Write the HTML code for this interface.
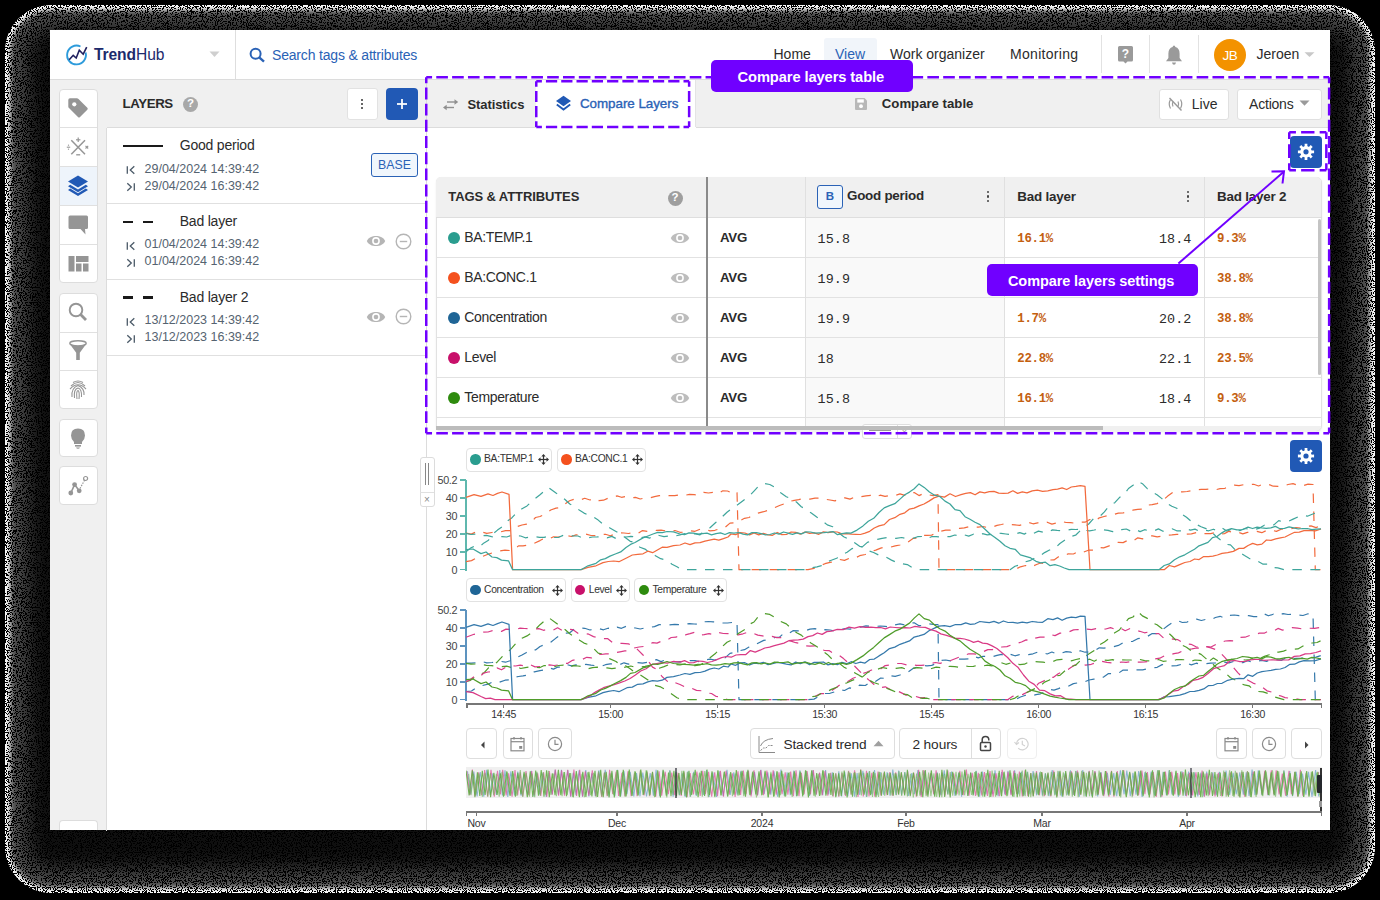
<!DOCTYPE html><html><head><meta charset='utf-8'><style>
html,body{margin:0;padding:0;}
body{width:1380px;height:900px;overflow:hidden;background:#000;position:relative;font-family:'Liberation Sans',sans-serif;}
.a{position:absolute;box-sizing:border-box;}
.t{position:absolute;line-height:1;white-space:nowrap;}
svg.a{overflow:visible;}
</style></head><body><svg class='a' style='left:0;top:0' width='1380' height='900'>
<defs>
<clipPath id="hc"><rect x="5" y="5" width="1370" height="888" rx="46" ry="46"/></clipPath>
<filter id="bl1" x="-5%" y="-5%" width="110%" height="110%"><feGaussianBlur stdDeviation="2.5"/></filter>
<filter id="bl2" x="-5%" y="-5%" width="110%" height="110%"><feGaussianBlur stdDeviation="10"/></filter>
<filter id="hn" x="0" y="0" width="1380" height="900" filterUnits="userSpaceOnUse" color-interpolation-filters="sRGB">
  <feTurbulence type="fractalNoise" baseFrequency="0.8" numOctaves="2" seed="5" result="n"/>
  <feColorMatrix in="n" type="matrix" values="1 0 0 0 0.04  1 0 0 0 0.04  1 0 0 0 0.04  0 0 0 0 1" result="no"/>
  <feComponentTransfer in="no" result="th"><feFuncR type="discrete" tableValues="0 1"/><feFuncG type="discrete" tableValues="0 1"/><feFuncB type="discrete" tableValues="0 1"/></feComponentTransfer>
  <feComposite in="SourceGraphic" in2="th" operator="arithmetic" k1="1" k2="0" k3="0" k4="0" result="m"/>
  <feComposite in="m" in2="SourceAlpha" operator="in"/>
</filter>
</defs>
<g filter="url(#hn)"><g clip-path="url(#hc)">
<rect x="0" y="0" width="1380" height="900" fill="rgb(15,15,15)"/>
<rect x="5" y="5" width="1370" height="888" rx="46" ry="46" fill="none" stroke="rgba(255,255,255,0.28)" stroke-width="44" filter="url(#bl2)"/>
<rect x="5" y="5" width="1370" height="888" rx="46" ry="46" fill="none" stroke="#fff" stroke-width="10" filter="url(#bl1)"/>
</g></g></svg>
<div class='a' style="left:50px;top:30px;width:1280px;height:800px;background:#fff;overflow:hidden;"></div>
<div class='a' style="left:50px;top:79px;width:1280px;height:1px;background:#dcdcdc;"></div>
<svg class='a' style='left:64px;top:42px;' width='26' height='26' viewBox='0 0 26 26'><path d='M21.6,10.6 A9.4,9.4 0 1 1 16.5,4.5' fill='none' stroke='#2d9bdb' stroke-width='1.9'/><polyline points='5.2,17.7 9.2,13.3 12.2,16 15.3,8.2 19.2,12.2 22.7,5.2' fill='none' stroke='#1f1f5e' stroke-width='1.6' stroke-linejoin='miter'/></svg>
<div class='t' style="left:94px;top:47.04px;font-size:15.6px;color:#1c2a6c;letter-spacing:-0.1px;"><b style='font-weight:700'>Trend</b>Hub</div>
<svg class='a' style='left:209px;top:51px;' width='12' height='7' viewBox='0 0 12 7'><polygon points='0.5,0.5 10.5,0.5 5.5,6' fill='#cfcfcf'/></svg>
<div class='a' style="left:235px;top:30px;width:1px;height:49px;background:#dedede;"></div>
<svg class='a' style='left:249px;top:47px;' width='18' height='16' viewBox='0 0 18 16'><circle cx='6.6' cy='6.8' r='5' fill='none' stroke='#2a62b6' stroke-width='2'/><line x1='10.2' y1='10.4' x2='15' y2='14.6' stroke='#2a62b6' stroke-width='2.4' stroke-linecap='butt'/></svg>
<div class='t' style="left:272px;top:48.10px;font-size:14px;color:#2a62b6;letter-spacing:-0.18px;">Search tags &amp; attributes</div>
<div class='a' style="left:824px;top:38px;width:53px;height:41px;background:#f1f5fa;border-radius:3px 3px 0 0;"></div>
<div class='t' style="left:773.5px;top:46.70px;font-size:14px;color:#2b2b2b;">Home</div>
<div class='t' style="left:835px;top:46.70px;font-size:14px;color:#2a62b6;">View</div>
<div class='t' style="left:890px;top:46.70px;font-size:14px;color:#2b2b2b;">Work organizer</div>
<div class='t' style="left:1010px;top:46.70px;font-size:14px;color:#2b2b2b;letter-spacing:0.3px;">Monitoring</div>
<div class='a' style="left:1101px;top:35px;width:1px;height:38px;background:#e2e2e2;"></div>
<div class='a' style="left:1149px;top:35px;width:1px;height:38px;background:#e2e2e2;"></div>
<div class='a' style="left:1198px;top:35px;width:1px;height:38px;background:#e2e2e2;"></div>
<svg class='a' style='left:1117px;top:45px;' width='18' height='20' viewBox='0 0 18 20'><path d='M2.5,1 H14.5 Q16,1 16,2.5 V15 Q16,16.5 14.5,16.5 H10.5 L8.5,18.5 L6.5,16.5 H2.5 Q1,16.5 1,15 V2.5 Q1,1 2.5,1 Z' fill='#9a9a9a'/><text x='8.5' y='13.3' font-size='12' font-weight='700' fill='#fff' text-anchor='middle' font-family='Liberation Sans'>?</text></svg>
<svg class='a' style='left:1164px;top:44px;' width='20' height='22' viewBox='0 0 20 22'><path d='M10,1.5 Q11.2,1.5 11.4,3 Q15.5,4.2 15.6,9.5 V14 L18,17.2 H2 L4.4,14 V9.5 Q4.5,4.2 8.6,3 Q8.8,1.5 10,1.5 Z' fill='#9a9a9a'/><path d='M8,18.6 H12 Q11.5,20.8 10,20.8 Q8.5,20.8 8,18.6 Z' fill='#9a9a9a'/></svg>
<div class='a' style="left:1214px;top:39px;width:32px;height:32px;background:#f39200;border-radius:50%;"></div>
<div class='t' style="left:1130px;width:200px;text-align:center;top:48.52px;font-size:13.5px;color:#fff;letter-spacing:-0.3px;">JB</div>
<div class='t' style="left:1256.5px;top:47.40px;font-size:14px;color:#2b2b2b;">Jeroen</div>
<svg class='a' style='left:1304px;top:52px;' width='12' height='6' viewBox='0 0 12 6'><polygon points='0.5,0.3 10.5,0.3 5.5,5' fill='#c8c8c8'/></svg>
<div class='a' style="left:50px;top:80px;width:56px;height:750px;background:#f0f0f0;"></div>
<div class='a' style="left:106px;top:127.5px;width:1px;height:703px;background:#dcdcdc;"></div>
<div class='a' style="left:58.5px;top:88.5px;width:39px;height:194.0px;background:#fff;border:1px solid #dddddd;border-radius:4px;"></div>
<div class='a' style="left:59px;top:127.3px;width:38px;height:1px;background:#e0e0e0;"></div>
<div class='a' style="left:59px;top:166.1px;width:38px;height:1px;background:#e0e0e0;"></div>
<div class='a' style="left:59px;top:204.89999999999998px;width:38px;height:1px;background:#e0e0e0;"></div>
<div class='a' style="left:59px;top:243.7px;width:38px;height:1px;background:#e0e0e0;"></div>
<div class='a' style="left:59.5px;top:167px;width:37px;height:38px;background:#eef4fb;"></div>
<div class='a' style="left:58.5px;top:292.7px;width:39px;height:116.39999999999999px;background:#fff;border:1px solid #dddddd;border-radius:4px;"></div>
<div class='a' style="left:59px;top:331.5px;width:38px;height:1px;background:#e0e0e0;"></div>
<div class='a' style="left:59px;top:370.29999999999995px;width:38px;height:1px;background:#e0e0e0;"></div>
<div class='a' style="left:58.5px;top:418.7px;width:39px;height:38.5px;background:#fff;border:1px solid #dddddd;border-radius:4px;"></div>
<div class='a' style="left:58.5px;top:466.3px;width:39px;height:38.7px;background:#fff;border:1px solid #dddddd;border-radius:4px;"></div>
<div class='a' style="left:58.5px;top:820px;width:39px;height:10px;background:#fff;border:1px solid #dddddd;border-bottom:none;border-radius:4px 4px 0 0;"></div>
<svg class='a' style='left:66px;top:97px;' width='24' height='24' viewBox='0 0 24 24'><path d='M2.3,3 Q2.3,1.3 4,1.3 H10.8 Q11.8,1.3 12.5,2 L21.3,10.8 Q22.3,11.8 21.3,12.8 L14,20.1 Q13,21.1 12,20.1 L3,11.1 Q2.3,10.4 2.3,9.4 Z' fill='#959595'/><circle cx='8.3' cy='7.3' r='2.1' fill='#fff'/></svg>
<svg class='a' style='left:66px;top:135px;' width='24' height='24' viewBox='0 0 24 24'><g stroke='#959595' stroke-width='1.5'><line x1='5.3' y1='5.3' x2='19' y2='19.3'/><line x1='19' y1='5.3' x2='5.3' y2='19.3'/><line x1='12.2' y1='2.5' x2='12.2' y2='7' stroke-width='1.2'/><line x1='10' y1='4.8' x2='14.4' y2='4.8' stroke-width='1.2'/><line x1='10.2' y1='19.8' x2='14.2' y2='19.8' stroke-width='1.3'/><line x1='0.8' y1='12.2' x2='4.2' y2='12.2' stroke-width='1.1'/><line x1='19.5' y1='10.8' x2='22.2' y2='13.5' stroke-width='1.1'/><line x1='22.2' y1='10.8' x2='19.5' y2='13.5' stroke-width='1.1'/></g><circle cx='2.5' cy='10.2' r='0.65' fill='#959595'/><circle cx='2.5' cy='14.2' r='0.65' fill='#959595'/></svg>
<svg class='a' style='left:66px;top:174px;' width='24' height='24' viewBox='0 0 24 24'><path d='M12,1.5 L22,7.5 L12,13.5 L2,7.5 Z' fill='#2159b5'/><path d='M4.2,10.8 L12,15.5 L19.8,10.8 L22,12.2 L12,18.3 L2,12.2 Z' fill='#2159b5'/><path d='M4.2,14.6 L12,19.3 L19.8,14.6 L22,16 L12,22.1 L2,16 Z' fill='#2159b5'/></svg>
<svg class='a' style='left:68px;top:215px;' width='21' height='21' viewBox='0 0 21 21'><path d='M2,0.5 H18.5 Q20,0.5 20,2 V12.5 Q20,14 18.5,14 H17 L17.5,19.5 L12.5,14 H2 Q0.5,14 0.5,12.5 V2 Q0.5,0.5 2,0.5 Z' fill='#959595'/></svg>
<svg class='a' style='left:68px;top:255px;' width='21' height='18' viewBox='0 0 21 18'><rect x='0.5' y='1' width='6' height='15.5' fill='#959595'/><rect x='8' y='1' width='12.5' height='6' fill='#959595'/><rect x='8' y='8.5' width='5.5' height='8' fill='#959595'/><rect x='15' y='8.5' width='5.5' height='8' fill='#959595'/></svg>
<svg class='a' style='left:66px;top:300px;' width='24' height='24' viewBox='0 0 24 24'><circle cx='10' cy='10' r='6.3' fill='none' stroke='#959595' stroke-width='1.9'/><line x1='14.6' y1='14.6' x2='20' y2='20' stroke='#959595' stroke-width='2.8'/></svg>
<svg class='a' style='left:66px;top:339px;' width='24' height='24' viewBox='0 0 24 24'><ellipse cx='12' cy='4.3' rx='8.2' ry='2.6' fill='none' stroke='#959595' stroke-width='1.4'/><path d='M3.8,5 Q12,8.6 20.2,5 L13.8,13.8 V21 H10.2 V13.8 Z' fill='#959595'/></svg>
<svg class='a' style='left:66px;top:378px;' width='24' height='24' viewBox='0 0 24 24'><g fill='none' stroke='#959595' stroke-width='1.1'><path d='M5,8 Q12,1 19,8'/><path d='M4,11 Q12,2.5 20,11'/><path d='M6,19 Q5,10 12,7.5 Q18.5,10 18,17'/><path d='M8.5,20 Q7.5,11 12,10 Q16,11 15.5,19'/><path d='M11,21 Q10,13 12,12.5 Q13.8,13.5 13,21'/><path d='M7,4.5 Q12,1.5 17,4.5'/></g></svg>
<svg class='a' style='left:66px;top:426px;' width='24' height='24' viewBox='0 0 24 24'><path d='M12,2.5 Q19,2.5 19,9.5 Q19,13 16,16 V18 H8 V16 Q5,13 5,9.5 Q5,2.5 12,2.5 Z' fill='#959595'/><rect x='9' y='19' width='6' height='1.6' fill='#959595'/><path d='M10,21.5 H14 Q13.5,22.8 12,22.8 Q10.5,22.8 10,21.5 Z' fill='#959595'/></svg>
<svg class='a' style='left:66px;top:474px;' width='24' height='24' viewBox='0 0 24 24'><circle cx='4.8' cy='19' r='2.4' fill='#959595'/><circle cx='8.6' cy='10.6' r='2.4' fill='#959595'/><circle cx='13.2' cy='16.8' r='2.4' fill='#959595'/><circle cx='19.6' cy='4.5' r='2' fill='none' stroke='#959595' stroke-width='1.2'/><line x1='4.8' y1='19' x2='8.6' y2='10.6' stroke='#959595' stroke-width='1.6'/><line x1='8.6' y1='10.6' x2='13.2' y2='16.8' stroke='#959595' stroke-width='1.6'/><line x1='14' y1='14.5' x2='18.5' y2='6.3' stroke='#959595' stroke-width='1.2' stroke-dasharray='1.5 1.2'/></svg>
<div class='a' style="left:106px;top:80px;width:320px;height:48px;background:#f0f0f0;"></div>
<div class='a' style="left:107px;top:127px;width:319px;height:1px;background:#dcdcdc;"></div>
<div class='t' style="left:122.5px;top:97.00px;font-size:13.3px;color:#2b2b2b;font-weight:700;letter-spacing:-0.4px;">LAYERS</div>
<div class='a' style="left:183px;top:96.5px;width:15px;height:15px;background:#a8a8a8;border-radius:50%;"></div>
<div class='t' style="left:90.5px;width:200px;text-align:center;top:98.42px;font-size:11.5px;color:#fff;font-weight:700;">?</div>
<div class='a' style="left:346.8px;top:88.3px;width:30.8px;height:31.5px;background:#fff;border:1px solid #e2e2e2;border-radius:3px;"></div>
<div class='a' style="left:360.8px;top:98.65px;width:2.5px;height:2.5px;background:#333;border-radius:50%;"></div>
<div class='a' style="left:360.8px;top:102.7px;width:2.5px;height:2.5px;background:#333;border-radius:50%;"></div>
<div class='a' style="left:360.8px;top:106.75px;width:2.5px;height:2.5px;background:#333;border-radius:50%;"></div>
<div class='a' style="left:386px;top:88px;width:32px;height:32px;background:#2159b5;border-radius:4px;"></div>
<div class='a' style="left:397.1px;top:103.1px;width:10.1px;height:1.8px;background:rgba(255,255,255,0.88);"></div>
<div class='a' style="left:401.25px;top:99px;width:1.8px;height:10.1px;background:rgba(255,255,255,0.88);"></div>
<div class='a' style="left:107px;top:128px;width:319px;height:702px;background:#fff;"></div>
<div class='a' style="left:107px;top:203.2px;width:319px;height:1px;background:#e0e0e0;"></div>
<div class='a' style="left:122.8px;top:145.0px;width:40.5px;height:2.3px;background:#1a1a1a;"></div>
<div class='t' style="left:179.7px;top:138.30px;font-size:14px;color:#2b2b2b;letter-spacing:-0.2px;">Good period</div>
<svg class='a' style='left:126px;top:165.0px;' width='10' height='10' viewBox='0 0 10 10'><line x1='1.3' y1='1.2' x2='1.3' y2='8.8' stroke='#4b5a68' stroke-width='1.3'/><polyline points='8.3,1.3 4.3,5 8.3,8.7' fill='none' stroke='#4b5a68' stroke-width='1.3'/></svg>
<svg class='a' style='left:126px;top:182.0px;' width='10' height='10' viewBox='0 0 10 10'><line x1='8.3' y1='1.2' x2='8.3' y2='8.8' stroke='#4b5a68' stroke-width='1.3'/><polyline points='1.3,1.3 5.3,5 1.3,8.7' fill='none' stroke='#4b5a68' stroke-width='1.3'/></svg>
<div class='t' style="left:144.5px;top:162.57px;font-size:12.5px;color:#556370;">29/04/2024 14:39:42</div>
<div class='t' style="left:144.5px;top:179.57px;font-size:12.5px;color:#556370;">29/04/2024 16:39:42</div>
<div class='a' style="left:371px;top:153px;width:47px;height:24px;background:#f0f6fc;border:1px solid #2a62b6;border-radius:3px;"></div>
<div class='t' style="left:294.5px;width:200px;text-align:center;top:158.84px;font-size:12.3px;color:#2a62b6;letter-spacing:0.1px;">BASE</div>
<div class='a' style="left:107px;top:279.0px;width:319px;height:1px;background:#e0e0e0;"></div>
<div class='a' style="left:122.8px;top:220.60000000000002px;width:10px;height:2.3px;background:#1a1a1a;"></div>
<div class='a' style="left:142.8px;top:220.60000000000002px;width:10px;height:2.3px;background:#1a1a1a;"></div>
<div class='t' style="left:179.7px;top:214.10px;font-size:14px;color:#2b2b2b;letter-spacing:-0.2px;">Bad layer</div>
<svg class='a' style='left:126px;top:240.8px;' width='10' height='10' viewBox='0 0 10 10'><line x1='1.3' y1='1.2' x2='1.3' y2='8.8' stroke='#4b5a68' stroke-width='1.3'/><polyline points='8.3,1.3 4.3,5 8.3,8.7' fill='none' stroke='#4b5a68' stroke-width='1.3'/></svg>
<svg class='a' style='left:126px;top:257.8px;' width='10' height='10' viewBox='0 0 10 10'><line x1='8.3' y1='1.2' x2='8.3' y2='8.8' stroke='#4b5a68' stroke-width='1.3'/><polyline points='1.3,1.3 5.3,5 1.3,8.7' fill='none' stroke='#4b5a68' stroke-width='1.3'/></svg>
<div class='t' style="left:144.5px;top:238.38px;font-size:12.5px;color:#556370;">01/04/2024 14:39:42</div>
<div class='t' style="left:144.5px;top:255.38px;font-size:12.5px;color:#556370;">01/04/2024 16:39:42</div>
<svg class='a' style='left:366px;top:235.0px;' width='20' height='12' viewBox='0 0 20 12'><path d='M0.8,6 C3.5,-0.8 16.5,-0.8 19.2,6 C16.5,12.8 3.5,12.8 0.8,6 Z' fill='#b5b5b5'/><circle cx='10' cy='6' r='3.9' fill='#fff'/><circle cx='10' cy='6' r='2.3' fill='#b5b5b5'/></svg>
<svg class='a' style='left:395px;top:232.5px;' width='17' height='17' viewBox='0 0 17 17'><circle cx='8.5' cy='8.5' r='7.3' fill='none' stroke='#b5b5b5' stroke-width='1.4'/><line x1='4.8' y1='8.5' x2='12.2' y2='8.5' stroke='#b5b5b5' stroke-width='1.4'/></svg>
<div class='a' style="left:107px;top:354.8px;width:319px;height:1px;background:#e0e0e0;"></div>
<div class='a' style="left:122.8px;top:296.40000000000003px;width:10px;height:2.3px;background:#1a1a1a;"></div>
<div class='a' style="left:142.8px;top:296.40000000000003px;width:10px;height:2.3px;background:#1a1a1a;"></div>
<div class='t' style="left:179.7px;top:289.90px;font-size:14px;color:#2b2b2b;letter-spacing:-0.2px;">Bad layer 2</div>
<svg class='a' style='left:126px;top:316.6px;' width='10' height='10' viewBox='0 0 10 10'><line x1='1.3' y1='1.2' x2='1.3' y2='8.8' stroke='#4b5a68' stroke-width='1.3'/><polyline points='8.3,1.3 4.3,5 8.3,8.7' fill='none' stroke='#4b5a68' stroke-width='1.3'/></svg>
<svg class='a' style='left:126px;top:333.6px;' width='10' height='10' viewBox='0 0 10 10'><line x1='8.3' y1='1.2' x2='8.3' y2='8.8' stroke='#4b5a68' stroke-width='1.3'/><polyline points='1.3,1.3 5.3,5 1.3,8.7' fill='none' stroke='#4b5a68' stroke-width='1.3'/></svg>
<div class='t' style="left:144.5px;top:314.18px;font-size:12.5px;color:#556370;">13/12/2023 14:39:42</div>
<div class='t' style="left:144.5px;top:331.18px;font-size:12.5px;color:#556370;">13/12/2023 16:39:42</div>
<svg class='a' style='left:366px;top:310.8px;' width='20' height='12' viewBox='0 0 20 12'><path d='M0.8,6 C3.5,-0.8 16.5,-0.8 19.2,6 C16.5,12.8 3.5,12.8 0.8,6 Z' fill='#b5b5b5'/><circle cx='10' cy='6' r='3.9' fill='#fff'/><circle cx='10' cy='6' r='2.3' fill='#b5b5b5'/></svg>
<svg class='a' style='left:395px;top:308.3px;' width='17' height='17' viewBox='0 0 17 17'><circle cx='8.5' cy='8.5' r='7.3' fill='none' stroke='#b5b5b5' stroke-width='1.4'/><line x1='4.8' y1='8.5' x2='12.2' y2='8.5' stroke='#b5b5b5' stroke-width='1.4'/></svg>
<div class='a' style="left:426px;top:80px;width:1px;height:750px;background:#dcdcdc;"></div>
<div class='a' style="left:427px;top:80px;width:903px;height:47.5px;background:#f0f0f0;"></div>
<div class='a' style="left:427px;top:127px;width:903px;height:1px;background:#dcdcdc;"></div>
<svg class='a' style='left:443px;top:98.5px;' width='16' height='12' viewBox='0 0 16 12'><g stroke='#8f8f8f' stroke-width='1.4' fill='none'><line x1='4' y1='3' x2='12' y2='3'/><line x1='3' y1='8.5' x2='11' y2='8.5'/></g><polygon points='11.5,0.2 15.2,3 11.5,5.8' fill='#8f8f8f'/><polygon points='3.7,5.7 0,8.5 3.7,11.3' fill='#8f8f8f'/></svg>
<div class='t' style="left:467.5px;top:97.75px;font-size:13px;color:#2b2b2b;font-weight:700;letter-spacing:-0.1px;">Statistics</div>
<div class='a' style="left:536px;top:80px;width:159.5px;height:48px;background:#fff;"></div>
<div class='a' style="left:695px;top:80px;width:1px;height:47px;background:#e4e4e4;"></div>
<svg class='a' style='left:555px;top:95px;' width='17' height='17' viewBox='0 0 17 17'><path d='M8.5,0.8 L16,6 L8.5,11.2 L1,6 Z' fill='#2159b5'/><polyline points='1.8,9.5 8.5,14.6 15.2,9.5' fill='none' stroke='#2159b5' stroke-width='1.9'/></svg>
<div class='t' style="left:580px;top:97.41px;font-size:13.4px;color:#2a62b6;letter-spacing:-0.05px;-webkit-text-stroke:0.35px #2a62b6;">Compare Layers</div>
<svg class='a' style='left:854px;top:97px;' width='14' height='14' viewBox='0 0 14 14'><path d='M1,2 Q1,1 2,1 H10.5 L13,3.5 V12 Q13,13 12,13 H2 Q1,13 1,12 Z' fill='#b8b8b8'/><rect x='3.3' y='2.3' width='6.5' height='3.3' fill='#fff'/><circle cx='7' cy='9.2' r='1.9' fill='#fff'/></svg>
<div class='t' style="left:881.8px;top:97.08px;font-size:13.2px;color:#2b2b2b;font-weight:700;">Compare table</div>
<div class='a' style="left:1158.5px;top:88.5px;width:70.5px;height:31px;background:#fff;border:1px solid #e0e0e0;border-radius:3px;"></div>
<svg class='a' style='left:1167px;top:97px;' width='17' height='14' viewBox='0 0 17 14'><g fill='none' stroke='#9a9a9a' stroke-width='1.2'><path d='M3.5,2.5 Q1,7 3.5,11.5'/><path d='M13.5,2.5 Q16,7 13.5,11.5'/><path d='M6,4.5 Q4.8,7 6,9.5'/><path d='M11,4.5 Q12.2,7 11,9.5'/><line x1='2.5' y1='1' x2='14.5' y2='13.5' stroke-width='1.4'/></g></svg>
<div class='t' style="left:1191.8px;top:97.10px;font-size:14px;color:#2b2b2b;">Live</div>
<div class='a' style="left:1236.5px;top:88.5px;width:85px;height:31px;background:#fff;border:1px solid #e0e0e0;border-radius:3px;"></div>
<div class='t' style="left:1249px;top:97.10px;font-size:14px;color:#2b2b2b;letter-spacing:-0.2px;">Actions</div>
<svg class='a' style='left:1299px;top:100px;' width='12' height='7' viewBox='0 0 12 7'><polygon points='0.5,0.5 10.5,0.5 5.5,5.8' fill='#9a9a9a'/></svg>
<div class='a' style="left:1290px;top:136px;width:32px;height:31.5px;background:#2159b5;border-radius:4px;"></div>
<svg class='a' style='left:1290px;top:136px;' width='32' height='32' viewBox='0 0 32 32'><polygon points='21.44,14.47 24.08,14.41 24.08,17.19 21.44,17.13 20.79,18.71 22.70,20.53 20.73,22.50 18.91,20.59 17.33,21.24 17.39,23.88 14.61,23.88 14.67,21.24 13.09,20.59 11.27,22.50 9.30,20.53 11.21,18.71 10.56,17.13 7.92,17.19 7.92,14.41 10.56,14.47 11.21,12.89 9.30,11.07 11.27,9.10 13.09,11.01 14.67,10.36 14.61,7.72 17.39,7.72 17.33,10.36 18.91,11.01 20.73,9.10 22.70,11.07 20.79,12.89' fill='#fff'/><circle cx='16' cy='15.8' r='5.6' fill='#fff'/><circle cx='16' cy='15.8' r='2.6' fill='#2159b5'/></svg>
<div class='a' style="left:435.5px;top:176.5px;width:886.0px;height:254px;background:#fff;border:1px solid #e2e2e2;border-radius:5px;overflow:hidden;box-shadow:0 1px 2px rgba(0,0,0,0.08);"></div>
<div class='a' style="left:436.0px;top:176.8px;width:885.0px;height:41px;background:#f0f0f0;border-radius:5px 5px 0 0;"></div>
<div class='a' style="left:435.5px;top:217px;width:886.0px;height:1px;background:#dedede;"></div>
<div class='a' style="left:805px;top:218px;width:199.5px;height:208px;background:#f9f9f9;"></div>
<div class='a' style="left:436.0px;top:257px;width:885.0px;height:1px;background:#e2e2e2;"></div>
<div class='a' style="left:436.0px;top:297px;width:885.0px;height:1px;background:#e2e2e2;"></div>
<div class='a' style="left:436.0px;top:337px;width:885.0px;height:1px;background:#e2e2e2;"></div>
<div class='a' style="left:436.0px;top:377px;width:885.0px;height:1px;background:#e2e2e2;"></div>
<div class='a' style="left:436.0px;top:417px;width:885.0px;height:1px;background:#e2e2e2;"></div>
<div class='a' style="left:706px;top:176.5px;width:2px;height:250px;background:#8a8a8a;"></div>
<div class='a' style="left:804.5px;top:176.5px;width:1px;height:250px;background:#e0e0e0;"></div>
<div class='a' style="left:1004px;top:176.5px;width:1px;height:250px;background:#e0e0e0;"></div>
<div class='a' style="left:1204px;top:176.5px;width:1px;height:250px;background:#e0e0e0;"></div>
<div class='a' style="left:436.0px;top:426px;width:885.0px;height:4.5px;background:#f0f0f0;border-radius:0 0 5px 5px;"></div>
<div class='a' style="left:436.0px;top:426px;width:667px;height:4px;background:#bcbcbc;"></div>
<div class='a' style="left:1317.5px;top:218.5px;width:3.3px;height:156px;background:#c4c4c4;border-radius:2px;"></div>
<div class='t' style="left:448.3px;top:189.75px;font-size:13px;color:#2b2b2b;font-weight:700;letter-spacing:-0.1px;">TAGS &amp; ATTRIBUTES</div>
<div class='a' style="left:667.5px;top:190.5px;width:15px;height:15px;background:#9e9e9e;border-radius:50%;"></div>
<div class='t' style="left:575px;width:200px;text-align:center;top:192.42px;font-size:11.5px;color:#fff;font-weight:700;">?</div>
<div class='a' style="left:817px;top:185px;width:26px;height:24px;background:#f0f6fc;border:1px solid #2a62b6;border-radius:3px;"></div>
<div class='t' style="left:730px;width:200px;text-align:center;top:191.42px;font-size:11.5px;color:#2a62b6;font-weight:700;">B</div>
<div class='t' style="left:847px;top:189.41px;font-size:13.4px;color:#2b2b2b;font-weight:700;letter-spacing:-0.25px;">Good period</div>
<div class='t' style="left:1017.3px;top:189.91px;font-size:13.4px;color:#2b2b2b;font-weight:700;letter-spacing:-0.2px;">Bad layer</div>
<div class='t' style="left:1217px;top:189.91px;font-size:13.4px;color:#2b2b2b;font-weight:700;letter-spacing:-0.2px;">Bad layer 2</div>
<div class='a' style="left:986.5999999999999px;top:191.1px;width:2.4px;height:2.4px;background:#444;border-radius:50%;"></div>
<div class='a' style="left:986.5999999999999px;top:195.4px;width:2.4px;height:2.4px;background:#444;border-radius:50%;"></div>
<div class='a' style="left:986.5999999999999px;top:199.70000000000002px;width:2.4px;height:2.4px;background:#444;border-radius:50%;"></div>
<div class='a' style="left:1186.8px;top:191.1px;width:2.4px;height:2.4px;background:#444;border-radius:50%;"></div>
<div class='a' style="left:1186.8px;top:195.4px;width:2.4px;height:2.4px;background:#444;border-radius:50%;"></div>
<div class='a' style="left:1186.8px;top:199.70000000000002px;width:2.4px;height:2.4px;background:#444;border-radius:50%;"></div>
<div class='a' style="left:447.8px;top:232.20000000000002px;width:12px;height:12px;background:#2a9d8f;border-radius:50%;"></div>
<div class='t' style="left:464.3px;top:230.40px;font-size:14px;color:#2b2b2b;letter-spacing:-0.35px;">BA:TEMP.1</div>
<svg class='a' style='left:670px;top:231.8px;' width='20' height='12' viewBox='0 0 20 12'><path d='M0.8,6 C3.5,-0.8 16.5,-0.8 19.2,6 C16.5,12.8 3.5,12.8 0.8,6 Z' fill='#bdbdbd'/><circle cx='10' cy='6' r='3.9' fill='#fff'/><circle cx='10' cy='6' r='2.3' fill='#bdbdbd'/></svg>
<div class='t' style="left:720px;top:231.00px;font-size:13.3px;color:#2b2b2b;font-weight:700;letter-spacing:-0.3px;">AVG</div>
<div class='t' style="left:817.5px;top:232.82px;font-size:13.4px;color:#2b2b2b;font-family:'Liberation Mono',monospace;letter-spacing:0.1px;">15.8</div>
<div class='t' style="left:1017.3px;top:233.08px;font-size:12.4px;color:#c4600f;font-weight:700;font-family:'Liberation Mono',monospace;letter-spacing:-0.3px;">16.1%</div>
<div class='t' style="right:188.5px;top:232.82px;font-size:13.4px;color:#2b2b2b;font-family:'Liberation Mono',monospace;letter-spacing:0.1px;">18.4</div>
<div class='t' style="left:1217px;top:233.08px;font-size:12.4px;color:#c4600f;font-weight:700;font-family:'Liberation Mono',monospace;letter-spacing:-0.3px;">9.3%</div>
<div class='a' style="left:447.8px;top:272.2px;width:12px;height:12px;background:#f4511e;border-radius:50%;"></div>
<div class='t' style="left:464.3px;top:270.40px;font-size:14px;color:#2b2b2b;letter-spacing:-0.35px;">BA:CONC.1</div>
<svg class='a' style='left:670px;top:271.8px;' width='20' height='12' viewBox='0 0 20 12'><path d='M0.8,6 C3.5,-0.8 16.5,-0.8 19.2,6 C16.5,12.8 3.5,12.8 0.8,6 Z' fill='#bdbdbd'/><circle cx='10' cy='6' r='3.9' fill='#fff'/><circle cx='10' cy='6' r='2.3' fill='#bdbdbd'/></svg>
<div class='t' style="left:720px;top:271.00px;font-size:13.3px;color:#2b2b2b;font-weight:700;letter-spacing:-0.3px;">AVG</div>
<div class='t' style="left:817.5px;top:272.82px;font-size:13.4px;color:#2b2b2b;font-family:'Liberation Mono',monospace;letter-spacing:0.1px;">19.9</div>
<div class='t' style="left:1217px;top:273.08px;font-size:12.4px;color:#c4600f;font-weight:700;font-family:'Liberation Mono',monospace;letter-spacing:-0.3px;">38.8%</div>
<div class='a' style="left:447.8px;top:312.2px;width:12px;height:12px;background:#1f6596;border-radius:50%;"></div>
<div class='t' style="left:464.3px;top:310.40px;font-size:14px;color:#2b2b2b;letter-spacing:-0.35px;">Concentration</div>
<svg class='a' style='left:670px;top:311.8px;' width='20' height='12' viewBox='0 0 20 12'><path d='M0.8,6 C3.5,-0.8 16.5,-0.8 19.2,6 C16.5,12.8 3.5,12.8 0.8,6 Z' fill='#bdbdbd'/><circle cx='10' cy='6' r='3.9' fill='#fff'/><circle cx='10' cy='6' r='2.3' fill='#bdbdbd'/></svg>
<div class='t' style="left:720px;top:311.00px;font-size:13.3px;color:#2b2b2b;font-weight:700;letter-spacing:-0.3px;">AVG</div>
<div class='t' style="left:817.5px;top:312.82px;font-size:13.4px;color:#2b2b2b;font-family:'Liberation Mono',monospace;letter-spacing:0.1px;">19.9</div>
<div class='t' style="left:1017.3px;top:313.08px;font-size:12.4px;color:#c4600f;font-weight:700;font-family:'Liberation Mono',monospace;letter-spacing:-0.3px;">1.7%</div>
<div class='t' style="right:188.5px;top:312.82px;font-size:13.4px;color:#2b2b2b;font-family:'Liberation Mono',monospace;letter-spacing:0.1px;">20.2</div>
<div class='t' style="left:1217px;top:313.08px;font-size:12.4px;color:#c4600f;font-weight:700;font-family:'Liberation Mono',monospace;letter-spacing:-0.3px;">38.8%</div>
<div class='a' style="left:447.8px;top:352.2px;width:12px;height:12px;background:#c8106a;border-radius:50%;"></div>
<div class='t' style="left:464.3px;top:350.40px;font-size:14px;color:#2b2b2b;letter-spacing:-0.35px;">Level</div>
<svg class='a' style='left:670px;top:351.8px;' width='20' height='12' viewBox='0 0 20 12'><path d='M0.8,6 C3.5,-0.8 16.5,-0.8 19.2,6 C16.5,12.8 3.5,12.8 0.8,6 Z' fill='#bdbdbd'/><circle cx='10' cy='6' r='3.9' fill='#fff'/><circle cx='10' cy='6' r='2.3' fill='#bdbdbd'/></svg>
<div class='t' style="left:720px;top:351.00px;font-size:13.3px;color:#2b2b2b;font-weight:700;letter-spacing:-0.3px;">AVG</div>
<div class='t' style="left:817.5px;top:352.82px;font-size:13.4px;color:#2b2b2b;font-family:'Liberation Mono',monospace;letter-spacing:0.1px;">18</div>
<div class='t' style="left:1017.3px;top:353.08px;font-size:12.4px;color:#c4600f;font-weight:700;font-family:'Liberation Mono',monospace;letter-spacing:-0.3px;">22.8%</div>
<div class='t' style="right:188.5px;top:352.82px;font-size:13.4px;color:#2b2b2b;font-family:'Liberation Mono',monospace;letter-spacing:0.1px;">22.1</div>
<div class='t' style="left:1217px;top:353.08px;font-size:12.4px;color:#c4600f;font-weight:700;font-family:'Liberation Mono',monospace;letter-spacing:-0.3px;">23.5%</div>
<div class='a' style="left:447.8px;top:392.2px;width:12px;height:12px;background:#2e8b0e;border-radius:50%;"></div>
<div class='t' style="left:464.3px;top:390.40px;font-size:14px;color:#2b2b2b;letter-spacing:-0.35px;">Temperature</div>
<svg class='a' style='left:670px;top:391.8px;' width='20' height='12' viewBox='0 0 20 12'><path d='M0.8,6 C3.5,-0.8 16.5,-0.8 19.2,6 C16.5,12.8 3.5,12.8 0.8,6 Z' fill='#bdbdbd'/><circle cx='10' cy='6' r='3.9' fill='#fff'/><circle cx='10' cy='6' r='2.3' fill='#bdbdbd'/></svg>
<div class='t' style="left:720px;top:391.00px;font-size:13.3px;color:#2b2b2b;font-weight:700;letter-spacing:-0.3px;">AVG</div>
<div class='t' style="left:817.5px;top:392.82px;font-size:13.4px;color:#2b2b2b;font-family:'Liberation Mono',monospace;letter-spacing:0.1px;">15.8</div>
<div class='t' style="left:1017.3px;top:393.08px;font-size:12.4px;color:#c4600f;font-weight:700;font-family:'Liberation Mono',monospace;letter-spacing:-0.3px;">16.1%</div>
<div class='t' style="right:188.5px;top:392.82px;font-size:13.4px;color:#2b2b2b;font-family:'Liberation Mono',monospace;letter-spacing:0.1px;">18.4</div>
<div class='t' style="left:1217px;top:393.08px;font-size:12.4px;color:#c4600f;font-weight:700;font-family:'Liberation Mono',monospace;letter-spacing:-0.3px;">9.3%</div>
<div class='a' style="left:861.5px;top:424px;width:50.5px;height:15px;background:#fff;border:1px solid #dedede;border-radius:3px;"></div>
<div class='a' style="left:897px;top:424.5px;width:1px;height:14px;background:#e0e0e0;"></div>
<div class='a' style="left:869px;top:429.5px;width:22px;height:1.5px;background:#999;"></div>
<div class='t' style="left:804.5px;width:200px;text-align:center;top:428.35px;font-size:9px;color:#999;">&#215;</div>
<div class='a' style="left:861px;top:426px;width:52px;height:4px;background:#bcbcbc;"></div>
<svg class='a' style='left:424.8px;top:75.6px;' width='905.4000000000001' height='358.6' viewBox='0 0 905.4000000000001 358.6'><line x1='1.25' y1='1.25' x2='904.15' y2='1.25' stroke='#7000ff' stroke-width='2.5' stroke-dasharray='11.643 4.198' stroke-dashoffset='5.821'/><line x1='904.15' y1='1.25' x2='904.15' y2='357.35' stroke='#7000ff' stroke-width='2.5' stroke-dasharray='11.897 4.289' stroke-dashoffset='5.948'/><line x1='904.15' y1='357.35' x2='1.25' y2='357.35' stroke='#7000ff' stroke-width='2.5' stroke-dasharray='11.643 4.198' stroke-dashoffset='5.821'/><line x1='1.25' y1='357.35' x2='1.25' y2='1.25' stroke='#7000ff' stroke-width='2.5' stroke-dasharray='11.897 4.289' stroke-dashoffset='5.948'/></svg>
<svg class='a' style='left:534.8px;top:80.2px;' width='155.4000000000001' height='48.2' viewBox='0 0 155.4000000000001 48.2'><line x1='1.25' y1='1.25' x2='154.15' y2='1.25' stroke='#7000ff' stroke-width='2.5' stroke-dasharray='11.238 4.052' stroke-dashoffset='5.619'/><line x1='154.15' y1='1.25' x2='154.15' y2='46.95' stroke='#7000ff' stroke-width='2.5' stroke-dasharray='11.197 4.037' stroke-dashoffset='5.598'/><line x1='154.15' y1='46.95' x2='1.25' y2='46.95' stroke='#7000ff' stroke-width='2.5' stroke-dasharray='11.238 4.052' stroke-dashoffset='5.619'/><line x1='1.25' y1='46.95' x2='1.25' y2='1.25' stroke='#7000ff' stroke-width='2.5' stroke-dasharray='11.197 4.037' stroke-dashoffset='5.598'/></svg>
<svg class='a' style='left:1287.6px;top:131.2px;' width='39.600000000000136' height='40.400000000000006' viewBox='0 0 39.600000000000136 40.400000000000006'><line x1='1.25' y1='1.25' x2='38.35' y2='1.25' stroke='#7000ff' stroke-width='2.5' stroke-dasharray='13.356 5.194' stroke-dashoffset='6.678'/><line x1='38.35' y1='1.25' x2='38.35' y2='39.15' stroke='#7000ff' stroke-width='2.5' stroke-dasharray='13.644 5.306' stroke-dashoffset='6.822'/><line x1='38.35' y1='39.15' x2='1.25' y2='39.15' stroke='#7000ff' stroke-width='2.5' stroke-dasharray='13.356 5.194' stroke-dashoffset='6.678'/><line x1='1.25' y1='39.15' x2='1.25' y2='1.25' stroke='#7000ff' stroke-width='2.5' stroke-dasharray='13.644 5.306' stroke-dashoffset='6.822'/></svg>
<div class='a' style="left:711.3px;top:60px;width:201.7px;height:31.8px;background:#7000ff;border-radius:5px;"></div>
<div class='t' style="left:737.5px;top:69.70px;font-size:14.7px;color:#fff;font-weight:700;letter-spacing:-0.1px;">Compare layers table</div>
<div class='a' style="left:987px;top:264px;width:211px;height:31.8px;background:#7000ff;border-radius:5px;"></div>
<div class='t' style="left:1008px;top:273.57px;font-size:14.5px;color:#fff;font-weight:700;letter-spacing:-0.1px;">Compare layers settings</div>
<svg class='a' style='left:1170px;top:165px;' width='125' height='105' viewBox='0 0 125 105'><line x1='8.4' y1='98.5' x2='113.5' y2='7' stroke='#7000ff' stroke-width='2'/><polyline points='101.5,6.5 114,6.3 112.5,18.5' fill='none' stroke='#7000ff' stroke-width='2'/></svg>
<div class='a' style="left:419.5px;top:456.5px;width:15px;height:50.5px;background:#fff;border:1px solid #dcdcdc;border-radius:3px;"></div>
<div class='a' style="left:420px;top:492px;width:14px;height:1px;background:#e0e0e0;"></div>
<div class='a' style="left:424.6px;top:463px;width:1.2px;height:22px;background:#888;"></div>
<div class='a' style="left:428.2px;top:463px;width:1.2px;height:22px;background:#888;"></div>
<div class='t' style="left:327px;width:200px;text-align:center;top:494.50px;font-size:10px;color:#888;">&#215;</div>
<div class='a' style="left:1290px;top:440px;width:32px;height:31.8px;background:#2159b5;border-radius:4px;"></div>
<svg class='a' style='left:1290px;top:440px;' width='32' height='32' viewBox='0 0 32 32'><polygon points='21.44,14.67 24.08,14.61 24.08,17.39 21.44,17.33 20.79,18.91 22.70,20.73 20.73,22.70 18.91,20.79 17.33,21.44 17.39,24.08 14.61,24.08 14.67,21.44 13.09,20.79 11.27,22.70 9.30,20.73 11.21,18.91 10.56,17.33 7.92,17.39 7.92,14.61 10.56,14.67 11.21,13.09 9.30,11.27 11.27,9.30 13.09,11.21 14.67,10.56 14.61,7.92 17.39,7.92 17.33,10.56 18.91,11.21 20.73,9.30 22.70,11.27 20.79,13.09' fill='#fff'/><circle cx='16' cy='16' r='5.6' fill='#fff'/><circle cx='16' cy='16' r='2.6' fill='#2159b5'/></svg>
<div class='a' style="left:465.8px;top:447.5px;width:86.69999999999999px;height:24px;background:#fff;border:1px solid #e2e2e2;border-radius:4px;"></div>
<div class='a' style="left:470.1px;top:454.0px;width:10.5px;height:10.5px;background:#2a9d8f;border-radius:50%;"></div>
<div class='t' style="left:484.1px;top:454.14px;font-size:10.3px;color:#333;letter-spacing:-0.35px;">BA:TEMP.1</div>
<svg class='a' style='left:537.7px;top:454.0px;' width='11' height='11' viewBox='0 0 11 11'><g stroke='#333' stroke-width='1.2' fill='#333'><line x1='5.5' y1='1' x2='5.5' y2='10'/><line x1='1' y1='5.5' x2='10' y2='5.5'/></g><g fill='#333'><polygon points='5.5,0 3.3,2.5 7.7,2.5'/><polygon points='5.5,11 3.3,8.5 7.7,8.5'/><polygon points='0,5.5 2.5,3.3 2.5,7.7'/><polygon points='11,5.5 8.5,3.3 8.5,7.7'/></g></svg>
<div class='a' style="left:556.7px;top:447.5px;width:89.59999999999991px;height:24px;background:#fff;border:1px solid #e2e2e2;border-radius:4px;"></div>
<div class='a' style="left:561.0px;top:454.0px;width:10.5px;height:10.5px;background:#f4511e;border-radius:50%;"></div>
<div class='t' style="left:575.0px;top:454.14px;font-size:10.3px;color:#333;letter-spacing:-0.35px;">BA:CONC.1</div>
<svg class='a' style='left:631.5px;top:454.0px;' width='11' height='11' viewBox='0 0 11 11'><g stroke='#333' stroke-width='1.2' fill='#333'><line x1='5.5' y1='1' x2='5.5' y2='10'/><line x1='1' y1='5.5' x2='10' y2='5.5'/></g><g fill='#333'><polygon points='5.5,0 3.3,2.5 7.7,2.5'/><polygon points='5.5,11 3.3,8.5 7.7,8.5'/><polygon points='0,5.5 2.5,3.3 2.5,7.7'/><polygon points='11,5.5 8.5,3.3 8.5,7.7'/></g></svg>
<div class='a' style="left:465.8px;top:578px;width:100.49999999999994px;height:24px;background:#fff;border:1px solid #e2e2e2;border-radius:4px;"></div>
<div class='a' style="left:470.1px;top:584.5px;width:10.5px;height:10.5px;background:#1f6596;border-radius:50%;"></div>
<div class='t' style="left:484.1px;top:584.64px;font-size:10.3px;color:#333;letter-spacing:-0.35px;">Concentration</div>
<svg class='a' style='left:551.5px;top:584.5px;' width='11' height='11' viewBox='0 0 11 11'><g stroke='#333' stroke-width='1.2' fill='#333'><line x1='5.5' y1='1' x2='5.5' y2='10'/><line x1='1' y1='5.5' x2='10' y2='5.5'/></g><g fill='#333'><polygon points='5.5,0 3.3,2.5 7.7,2.5'/><polygon points='5.5,11 3.3,8.5 7.7,8.5'/><polygon points='0,5.5 2.5,3.3 2.5,7.7'/><polygon points='11,5.5 8.5,3.3 8.5,7.7'/></g></svg>
<div class='a' style="left:570.5px;top:578px;width:59.799999999999955px;height:24px;background:#fff;border:1px solid #e2e2e2;border-radius:4px;"></div>
<div class='a' style="left:574.8px;top:584.5px;width:10.5px;height:10.5px;background:#c8106a;border-radius:50%;"></div>
<div class='t' style="left:588.8px;top:584.64px;font-size:10.3px;color:#333;letter-spacing:-0.35px;">Level</div>
<svg class='a' style='left:615.5px;top:584.5px;' width='11' height='11' viewBox='0 0 11 11'><g stroke='#333' stroke-width='1.2' fill='#333'><line x1='5.5' y1='1' x2='5.5' y2='10'/><line x1='1' y1='5.5' x2='10' y2='5.5'/></g><g fill='#333'><polygon points='5.5,0 3.3,2.5 7.7,2.5'/><polygon points='5.5,11 3.3,8.5 7.7,8.5'/><polygon points='0,5.5 2.5,3.3 2.5,7.7'/><polygon points='11,5.5 8.5,3.3 8.5,7.7'/></g></svg>
<div class='a' style="left:634.2px;top:578px;width:93.29999999999995px;height:24px;background:#fff;border:1px solid #e2e2e2;border-radius:4px;"></div>
<div class='a' style="left:638.5px;top:584.5px;width:10.5px;height:10.5px;background:#2e8b0e;border-radius:50%;"></div>
<div class='t' style="left:652.5px;top:584.64px;font-size:10.3px;color:#333;letter-spacing:-0.35px;">Temperature</div>
<svg class='a' style='left:712.7px;top:584.5px;' width='11' height='11' viewBox='0 0 11 11'><g stroke='#333' stroke-width='1.2' fill='#333'><line x1='5.5' y1='1' x2='5.5' y2='10'/><line x1='1' y1='5.5' x2='10' y2='5.5'/></g><g fill='#333'><polygon points='5.5,0 3.3,2.5 7.7,2.5'/><polygon points='5.5,11 3.3,8.5 7.7,8.5'/><polygon points='0,5.5 2.5,3.3 2.5,7.7'/><polygon points='11,5.5 8.5,3.3 8.5,7.7'/></g></svg>
<div class='a' style="left:465px;top:480.00000000000006px;width:1.6px;height:90.5px;background:#5fb8ae;"></div>
<div class='a' style="left:460px;top:568.9000000000001px;width:6px;height:1.6px;background:#5fb8ae;"></div>
<div class='t' style="right:923px;top:564.52px;font-size:10.8px;color:#444;letter-spacing:-0.4px;">0</div>
<div class='a' style="left:460px;top:551.0314741035858px;width:6px;height:1.6px;background:#5fb8ae;"></div>
<div class='t' style="right:923px;top:546.65px;font-size:10.8px;color:#444;letter-spacing:-0.4px;">10</div>
<div class='a' style="left:460px;top:533.1629482071714px;width:6px;height:1.6px;background:#5fb8ae;"></div>
<div class='t' style="right:923px;top:528.78px;font-size:10.8px;color:#444;letter-spacing:-0.4px;">20</div>
<div class='a' style="left:460px;top:515.2944223107571px;width:6px;height:1.6px;background:#5fb8ae;"></div>
<div class='t' style="right:923px;top:510.91px;font-size:10.8px;color:#444;letter-spacing:-0.4px;">30</div>
<div class='a' style="left:460px;top:497.4258964143427px;width:6px;height:1.6px;background:#5fb8ae;"></div>
<div class='t' style="right:923px;top:493.05px;font-size:10.8px;color:#444;letter-spacing:-0.4px;">40</div>
<div class='a' style="left:460px;top:479.20000000000005px;width:6px;height:1.6px;background:#5fb8ae;"></div>
<div class='t' style="right:923px;top:474.82px;font-size:10.8px;color:#444;letter-spacing:-0.4px;">50.2</div>
<div class='a' style="left:465px;top:610.0px;width:1.6px;height:90.5px;background:#5d93bf;"></div>
<div class='a' style="left:460px;top:698.9000000000001px;width:6px;height:1.6px;background:#5d93bf;"></div>
<div class='t' style="right:923px;top:694.52px;font-size:10.8px;color:#444;letter-spacing:-0.4px;">0</div>
<div class='a' style="left:460px;top:681.0314741035858px;width:6px;height:1.6px;background:#5d93bf;"></div>
<div class='t' style="right:923px;top:676.65px;font-size:10.8px;color:#444;letter-spacing:-0.4px;">10</div>
<div class='a' style="left:460px;top:663.1629482071714px;width:6px;height:1.6px;background:#5d93bf;"></div>
<div class='t' style="right:923px;top:658.78px;font-size:10.8px;color:#444;letter-spacing:-0.4px;">20</div>
<div class='a' style="left:460px;top:645.2944223107571px;width:6px;height:1.6px;background:#5d93bf;"></div>
<div class='t' style="right:923px;top:640.91px;font-size:10.8px;color:#444;letter-spacing:-0.4px;">30</div>
<div class='a' style="left:460px;top:627.4258964143428px;width:6px;height:1.6px;background:#5d93bf;"></div>
<div class='t' style="right:923px;top:623.05px;font-size:10.8px;color:#444;letter-spacing:-0.4px;">40</div>
<div class='a' style="left:460px;top:609.2px;width:6px;height:1.6px;background:#5d93bf;"></div>
<div class='t' style="right:923px;top:604.82px;font-size:10.8px;color:#444;letter-spacing:-0.4px;">50.2</div>
<div class='a' style="left:466px;top:702.8px;width:856px;height:2px;background:#777;"></div>
<div class='a' style="left:466px;top:702.8px;width:1.5px;height:5px;background:#777;"></div>
<div class='a' style="left:1320.5px;top:702.8px;width:1.5px;height:5px;background:#777;"></div>
<div class='a' style="left:502.90000000000003px;top:703px;width:1.5px;height:4.5px;background:#777;"></div>
<div class='t' style="left:403.6px;width:200px;text-align:center;top:708.58px;font-size:10.5px;color:#333;letter-spacing:-0.3px;">14:45</div>
<div class='a' style="left:609.9px;top:703px;width:1.5px;height:4.5px;background:#777;"></div>
<div class='t' style="left:510.6px;width:200px;text-align:center;top:708.58px;font-size:10.5px;color:#333;letter-spacing:-0.3px;">15:00</div>
<div class='a' style="left:716.9px;top:703px;width:1.5px;height:4.5px;background:#777;"></div>
<div class='t' style="left:617.6px;width:200px;text-align:center;top:708.58px;font-size:10.5px;color:#333;letter-spacing:-0.3px;">15:15</div>
<div class='a' style="left:823.9px;top:703px;width:1.5px;height:4.5px;background:#777;"></div>
<div class='t' style="left:724.6px;width:200px;text-align:center;top:708.58px;font-size:10.5px;color:#333;letter-spacing:-0.3px;">15:30</div>
<div class='a' style="left:930.9px;top:703px;width:1.5px;height:4.5px;background:#777;"></div>
<div class='t' style="left:831.6px;width:200px;text-align:center;top:708.58px;font-size:10.5px;color:#333;letter-spacing:-0.3px;">15:45</div>
<div class='a' style="left:1037.8999999999999px;top:703px;width:1.5px;height:4.5px;background:#777;"></div>
<div class='t' style="left:938.5999999999999px;width:200px;text-align:center;top:708.58px;font-size:10.5px;color:#333;letter-spacing:-0.3px;">16:00</div>
<div class='a' style="left:1144.8999999999999px;top:703px;width:1.5px;height:4.5px;background:#777;"></div>
<div class='t' style="left:1045.6px;width:200px;text-align:center;top:708.58px;font-size:10.5px;color:#333;letter-spacing:-0.3px;">16:15</div>
<div class='a' style="left:1251.8999999999999px;top:703px;width:1.5px;height:4.5px;background:#777;"></div>
<div class='t' style="left:1152.6px;width:200px;text-align:center;top:708.58px;font-size:10.5px;color:#333;letter-spacing:-0.3px;">16:30</div>
<div class='a' style="left:466.3px;top:728.2px;width:31.19999999999999px;height:31.299999999999955px;background:#fff;border:1px solid #dedede;border-radius:4px;"></div>
<div class='a' style="left:502.5px;top:728.2px;width:30.799999999999955px;height:31.299999999999955px;background:#fff;border:1px solid #dedede;border-radius:4px;"></div>
<div class='a' style="left:538.3px;top:728.2px;width:33.40000000000009px;height:31.299999999999955px;background:#fff;border:1px solid #dedede;border-radius:4px;"></div>
<svg class='a' style='left:478.5px;top:739.5px;' width='8' height='10' viewBox='0 0 8 10'><polygon points='5.5,1.5 2,5 5.5,8.5' fill='#444'/></svg>
<svg class='a' style='left:510px;top:735.5px;' width='16' height='16' viewBox='0 0 16 16'><rect x='1' y='2.5' width='13' height='12.3' fill='none' stroke='#8a8a8a' stroke-width='1.2'/><line x1='1' y1='5.7' x2='14' y2='5.7' stroke='#8a8a8a' stroke-width='1.2'/><line x1='4' y1='1' x2='4' y2='3.5' stroke='#8a8a8a' stroke-width='1.4'/><line x1='11' y1='1' x2='11' y2='3.5' stroke='#8a8a8a' stroke-width='1.4'/><rect x='9.2' y='10' width='3' height='2.8' fill='#8a8a8a'/></svg>
<svg class='a' style='left:547px;top:735.5px;' width='16' height='16' viewBox='0 0 16 16'><circle cx='8' cy='8' r='6.6' fill='none' stroke='#8a8a8a' stroke-width='1.2'/><polyline points='8,3.8 8,8.3 11.5,8.3' fill='none' stroke='#8a8a8a' stroke-width='1.2'/></svg>
<div class='a' style="left:750.3px;top:728.2px;width:144.30000000000007px;height:31.299999999999955px;background:#fff;border:1px solid #dedede;border-radius:4px;"></div>
<svg class='a' style='left:757px;top:735px;' width='20' height='19' viewBox='0 0 20 19'><g fill='none' stroke='#8a8a8a' stroke-width='1'><polyline points='2,1 2,17.5 18,17.5'/><path d='M3.5,11 Q6,4.5 16,3.5'/><path d='M3.5,15.5 L6.5,13 H9 L11.5,10.5 H16' stroke-dasharray='2 1'/></g></svg>
<div class='t' style="left:783.4px;top:737.56px;font-size:13.7px;color:#2b2b2b;letter-spacing:-0.1px;">Stacked trend</div>
<svg class='a' style='left:872.5px;top:739.5px;' width='11' height='7' viewBox='0 0 11 7'><polygon points='0.5,6.3 10.5,6.3 5.5,0.8' fill='#a0a0a0'/></svg>
<div class='a' style="left:899.4px;top:728.2px;width:102.0px;height:31.299999999999955px;background:#fff;border:1px solid #dedede;border-radius:4px;"></div>
<div class='a' style="left:970.6px;top:729px;width:1px;height:30px;background:#dedede;"></div>
<div class='t' style="left:912.4px;top:737.56px;font-size:13.7px;color:#2b2b2b;letter-spacing:-0.1px;">2 hours</div>
<svg class='a' style='left:978px;top:735px;' width='15' height='17' viewBox='0 0 15 17'><path d='M4.2,7.5 V4.8 Q4.2,1.5 7.5,1.5 Q10.8,1.5 10.8,4.8 V5.5' fill='none' stroke='#444' stroke-width='1.5'/><rect x='2.5' y='7.5' width='10' height='8' rx='1' fill='none' stroke='#444' stroke-width='1.5'/><circle cx='7.5' cy='11.5' r='1.2' fill='#444'/></svg>
<div class='a' style="left:1006.7px;top:728.2px;width:30.799999999999955px;height:31.299999999999955px;background:#fff;border:1px solid #dedede;border-radius:4px;border-color:#efefef;"></div>
<svg class='a' style='left:1013px;top:736px;' width='17' height='16' viewBox='0 0 17 16'><path d='M3.5,8 A5.8,5.8 0 1 1 5.2,12.2' fill='none' stroke='#d2d2d2' stroke-width='1.2'/><polyline points='1.5,6 3.5,8.5 6,6.5' fill='none' stroke='#d2d2d2' stroke-width='1.2'/><polyline points='9.3,4.8 9.3,8.5 12,10' fill='none' stroke='#d2d2d2' stroke-width='1.2'/></svg>
<div class='a' style="left:1216.4px;top:728.2px;width:31.0px;height:31.299999999999955px;background:#fff;border:1px solid #dedede;border-radius:4px;"></div>
<div class='a' style="left:1252px;top:728.2px;width:33.5px;height:31.299999999999955px;background:#fff;border:1px solid #dedede;border-radius:4px;"></div>
<div class='a' style="left:1290.6px;top:728.2px;width:31.0px;height:31.299999999999955px;background:#fff;border:1px solid #dedede;border-radius:4px;"></div>
<svg class='a' style='left:1224px;top:735.5px;' width='16' height='16' viewBox='0 0 16 16'><rect x='1' y='2.5' width='13' height='12.3' fill='none' stroke='#8a8a8a' stroke-width='1.2'/><line x1='1' y1='5.7' x2='14' y2='5.7' stroke='#8a8a8a' stroke-width='1.2'/><line x1='4' y1='1' x2='4' y2='3.5' stroke='#8a8a8a' stroke-width='1.4'/><line x1='11' y1='1' x2='11' y2='3.5' stroke='#8a8a8a' stroke-width='1.4'/><rect x='9.2' y='10' width='3' height='2.8' fill='#8a8a8a'/></svg>
<svg class='a' style='left:1261px;top:735.5px;' width='16' height='16' viewBox='0 0 16 16'><circle cx='8' cy='8' r='6.6' fill='none' stroke='#8a8a8a' stroke-width='1.2'/><polyline points='8,3.8 8,8.3 11.5,8.3' fill='none' stroke='#8a8a8a' stroke-width='1.2'/></svg>
<svg class='a' style='left:1302.5px;top:739.5px;' width='8' height='10' viewBox='0 0 8 10'><polygon points='2,1.5 5.5,5 2,8.5' fill='#444'/></svg>
<div class='a' style="left:466px;top:767.2px;width:856px;height:31px;background:#f0f0f0;"></div>
<div class='a' style="left:466px;top:811.3px;width:856px;height:1.8px;background:#777;"></div>
<div class='a' style="left:466px;top:811.3px;width:1.2px;height:4.5px;background:#777;"></div>
<div class='a' style="left:1320.6px;top:811.3px;width:1.2px;height:4.5px;background:#777;"></div>
<div class='a' style="left:475.9px;top:811.3px;width:1.2px;height:4.5px;background:#777;"></div>
<div class='t' style="left:376.5px;width:200px;text-align:center;top:818.38px;font-size:10.5px;color:#333;letter-spacing:-0.2px;">Nov</div>
<div class='a' style="left:616.4px;top:811.3px;width:1.2px;height:4.5px;background:#777;"></div>
<div class='t' style="left:517px;width:200px;text-align:center;top:818.38px;font-size:10.5px;color:#333;letter-spacing:-0.2px;">Dec</div>
<div class='a' style="left:761.4px;top:811.3px;width:1.2px;height:4.5px;background:#777;"></div>
<div class='t' style="left:662px;width:200px;text-align:center;top:818.38px;font-size:10.5px;color:#333;letter-spacing:-0.2px;">2024</div>
<div class='a' style="left:905.4px;top:811.3px;width:1.2px;height:4.5px;background:#777;"></div>
<div class='t' style="left:806px;width:200px;text-align:center;top:818.38px;font-size:10.5px;color:#333;letter-spacing:-0.2px;">Feb</div>
<div class='a' style="left:1041.4px;top:811.3px;width:1.2px;height:4.5px;background:#777;"></div>
<div class='t' style="left:942px;width:200px;text-align:center;top:818.38px;font-size:10.5px;color:#333;letter-spacing:-0.2px;">Mar</div>
<div class='a' style="left:1186.4px;top:811.3px;width:1.2px;height:4.5px;background:#777;"></div>
<div class='t' style="left:1087px;width:200px;text-align:center;top:818.38px;font-size:10.5px;color:#333;letter-spacing:-0.2px;">Apr</div>
<svg class='a' style='left:0;top:0' width='1380' height='900'><polyline points='466.0,533.1 471.2,534.1 476.4,531.7 481.6,531.9 486.8,533.4 492.0,532.5 496.5,532.1 501.0,531.8 505.5,530.7 510.0,530.7 516.0,527.0 522.0,525.0 526.5,524.2 531.0,522.3 535.5,517.5 540.0,516.5 545.3,513.9 550.7,510.0 556.0,508.1 560.5,507.5 565.0,503.9 569.5,500.8 574.0,499.3 579.3,500.4 584.7,498.3 590.0,500.0 594.5,498.3 599.0,500.6 603.5,500.2 608.0,498.2 612.5,497.6 617.0,495.9 621.5,497.3 626.0,496.4 630.8,497.7 635.5,497.4 640.2,499.0 645.0,497.9 649.8,498.0 654.5,496.6 659.2,495.7 664.0,495.0 669.3,495.7 674.7,495.6 680.0,494.7 684.8,495.3 689.5,494.3 694.2,494.6 699.0,495.2 703.8,492.3 708.5,493.0 713.2,492.4 718.0,493.6 722.8,490.8 727.5,491.0 732.2,493.1 737.0,491.6 739.0,569.7 743.6,569.7 748.2,569.7 752.8,569.7 757.4,569.7 762.0,569.7 766.6,569.7 771.2,569.7 775.8,569.7 780.4,569.7 785.0,569.7 789.6,569.7 794.2,569.7 798.8,569.7 803.4,569.7 808.0,569.7 814.0,568.3 820.0,565.8 825.0,563.7 830.0,562.3 835.0,561.7 839.8,559.5 844.5,560.4 849.2,558.3 854.0,558.6 859.7,555.7 865.3,554.5 871.0,551.5 875.8,550.1 880.7,548.1 885.5,547.1 890.3,547.2 895.2,545.8 900.0,545.0 906.5,543.2 913.0,538.4 917.7,538.2 922.3,535.3 927.0,535.4 931.7,535.1 936.3,532.8 941.0,531.2 945.7,530.2 950.3,530.1 955.0,528.6 959.7,528.4 964.3,527.9 969.0,526.6 973.7,527.1 978.3,527.2 983.0,526.5 987.7,527.6 992.3,527.2 997.0,525.4 1001.5,524.5 1006.0,523.4 1010.5,524.5 1015.0,524.9 1019.5,525.4 1024.0,524.2 1028.5,522.4 1033.0,523.8 1037.7,522.8 1042.5,523.4 1047.2,522.2 1051.9,524.1 1056.6,523.0 1061.4,521.4 1066.1,522.5 1070.8,522.7 1075.5,523.2 1080.3,522.2 1085.0,522.2 1089.8,519.5 1094.6,521.5 1099.3,517.8 1104.1,516.5 1108.9,515.2 1113.7,514.5 1118.4,513.1 1123.2,512.9 1128.0,511.8 1132.8,510.2 1137.7,509.3 1142.5,509.1 1147.3,505.1 1152.2,504.7 1157.0,503.6 1162.3,500.8 1167.7,496.1 1173.0,492.3 1177.7,491.9 1182.4,491.9 1187.1,491.5 1191.9,490.5 1196.6,489.8 1201.3,489.4 1206.0,489.3 1210.7,488.9 1215.4,489.8 1220.1,488.6 1224.9,488.3 1229.6,486.5 1234.3,485.1 1239.0,485.7 1243.9,484.6 1248.8,484.5 1253.7,484.3 1258.6,486.0 1263.5,484.0 1268.4,484.4 1273.3,486.2 1278.2,486.3 1283.1,486.2 1288.0,484.5 1293.0,483.6 1298.0,485.3 1303.0,485.7 1308.0,484.1 1313.0,484.5 1315.3,569.7 1321.0,569.7' fill='none' stroke='#f26a3d' stroke-width='1.2' stroke-dasharray='9.5 8.5' stroke-linejoin='round'/><polyline points='466.0,551.8 470.5,548.1 475.0,545.9 479.5,546.6 484.0,542.9 488.5,540.2 493.0,533.8 497.5,530.1 502.0,526.8 507.0,521.4 512.0,517.7 517.0,512.2 522.0,508.7 527.0,505.9 533.5,499.9 540.0,494.7 548.5,487.5 556.0,493.0 560.5,496.0 565.0,499.5 569.8,504.0 574.5,506.5 579.2,510.0 584.0,513.1 588.8,515.2 593.5,517.1 598.2,520.1 603.0,524.3 609.5,527.7 616.0,531.5 620.8,534.4 625.5,537.7 630.2,541.3 635.0,542.5 640.0,547.3 645.0,549.1 650.0,552.8 655.0,555.4 660.7,558.7 666.3,560.0 672.0,564.2 677.0,566.8 682.0,569.7 686.5,569.7 691.0,569.7 695.5,569.7 700.0,569.7 704.5,569.7 709.0,569.7 713.5,569.7 718.0,569.7 722.5,569.7 727.0,569.7 731.5,569.7 736.0,569.7 740.5,569.7 745.0,569.7 749.5,569.7 754.0,569.7 758.5,569.7 763.0,569.7 767.5,569.7 772.0,569.7 776.5,569.7 781.0,569.7 785.5,569.7 790.0,569.7 794.5,569.7 799.0,569.7 803.5,569.7 808.0,569.7 812.5,567.6 817.0,566.8 821.5,565.6 826.0,562.2 831.3,560.2 836.7,558.2 842.0,554.5 847.1,552.3 852.1,548.6 857.2,547.4 862.3,546.9 867.4,542.4 872.4,540.5 877.5,539.3 882.1,538.3 886.8,537.6 891.4,537.8 896.0,538.4 901.7,537.5 907.3,538.9 913.0,538.4 917.6,536.7 922.3,536.5 926.9,538.8 931.6,536.7 936.2,536.6 940.9,537.2 945.5,536.7 950.1,536.6 954.8,535.0 959.4,536.1 964.1,534.8 968.7,536.1 973.4,534.2 978.0,535.2 982.6,533.7 987.3,534.9 991.9,534.3 996.6,533.0 1001.2,533.4 1005.9,534.0 1010.5,534.6 1015.1,534.0 1019.8,532.6 1024.4,534.1 1029.1,531.5 1033.7,533.4 1038.4,531.1 1043.0,532.2 1047.7,532.4 1052.4,529.9 1057.1,530.4 1061.9,530.6 1066.6,530.2 1071.3,529.4 1076.0,529.5 1080.6,529.3 1085.1,530.4 1089.7,530.8 1094.3,530.0 1098.9,528.7 1103.4,529.9 1108.0,530.4 1112.6,531.7 1117.2,529.3 1121.7,529.6 1126.3,529.0 1130.9,531.2 1135.5,529.4 1140.1,531.6 1144.6,529.7 1149.2,530.9 1153.8,531.0 1158.4,528.9 1163.0,531.3 1167.5,529.9 1172.1,528.8 1176.7,530.8 1181.3,530.9 1185.9,528.7 1190.5,530.1 1195.0,529.1 1199.6,531.3 1204.2,530.2 1208.8,530.8 1213.4,529.2 1217.9,531.0 1222.5,528.2 1227.1,531.2 1231.7,528.9 1236.3,531.1 1240.8,530.3 1245.4,528.5 1250.0,529.5 1254.8,529.4 1259.6,528.1 1264.4,525.2 1269.1,525.0 1273.9,524.9 1278.7,520.6 1283.5,522.1 1288.3,521.3 1293.1,519.1 1297.9,517.0 1302.6,515.4 1307.4,516.2 1312.2,514.3 1317.0,512.5 1321.0,510.7' fill='none' stroke='#3ea59b' stroke-width='1.2' stroke-dasharray='9.5 8.5' stroke-linejoin='round'/><polyline points='466.0,561.7 471.5,560.6 477.0,557.8 482.5,556.4 488.0,554.2 493.7,552.5 499.3,551.1 505.0,550.2 509.5,550.5 514.0,549.6 518.5,545.9 523.0,545.9 528.7,544.9 534.3,543.2 540.0,540.6 544.5,538.1 549.0,538.9 553.5,536.8 558.0,537.0 562.5,536.5 567.0,535.5 571.5,536.5 576.0,534.9 581.0,534.6 586.0,534.1 591.0,535.5 596.0,535.7 600.8,534.5 605.5,534.3 610.2,535.8 615.0,534.0 619.5,532.8 624.0,533.0 628.5,533.5 633.0,532.5 637.8,533.6 642.5,530.6 647.2,531.4 652.0,530.9 656.5,530.4 661.0,530.1 665.5,530.8 670.0,531.6 675.0,530.5 680.0,532.3 685.0,532.2 690.0,530.7 695.0,531.3 700.0,529.2 705.0,528.9 710.0,530.9 715.0,530.3 720.0,528.6 725.0,527.5 730.0,523.1 735.0,522.8 740.0,520.6 744.5,518.3 749.0,517.5 753.5,515.0 758.0,513.2 763.7,511.7 769.3,509.9 775.0,507.5 779.5,505.5 784.0,503.9 788.5,501.1 793.0,500.7 798.7,499.6 804.3,498.3 810.0,499.1 815.0,498.2 820.0,498.0 825.0,499.2 830.0,500.0 835.0,500.9 840.0,498.4 845.0,497.8 850.0,499.1 855.3,496.7 860.7,496.8 866.0,495.9 870.8,495.3 875.5,497.1 880.2,495.2 885.0,496.4 890.0,495.4 895.0,495.5 900.0,493.9 904.8,495.4 909.5,493.0 914.2,492.6 919.0,495.6 923.8,493.4 928.5,494.8 933.2,495.7 938.0,494.7 939.0,569.7 943.7,569.7 948.5,569.7 953.2,569.7 957.9,569.7 962.7,569.7 967.4,569.7 972.1,569.7 976.9,569.7 981.6,569.7 986.3,569.7 991.1,569.7 995.8,569.7 1000.5,569.7 1005.3,569.7 1010.0,569.7 1015.2,569.4 1020.4,566.8 1025.6,565.5 1030.8,567.2 1036.0,564.7 1040.5,563.0 1045.0,563.5 1049.5,560.0 1054.0,559.9 1058.5,556.8 1063.0,556.7 1068.2,553.8 1073.4,554.0 1078.6,551.1 1083.8,552.0 1089.0,550.0 1093.9,550.2 1098.8,547.3 1103.6,547.9 1108.5,546.1 1113.4,544.2 1118.2,542.3 1123.1,542.6 1128.0,540.2 1132.9,541.1 1137.8,537.8 1142.6,538.9 1147.5,536.2 1152.4,535.8 1157.2,536.9 1162.1,536.0 1167.0,535.2 1171.9,534.9 1176.8,534.3 1181.6,534.3 1186.5,534.2 1191.4,533.8 1196.2,532.6 1201.1,533.8 1206.0,533.6 1210.6,533.7 1215.2,532.6 1219.8,534.0 1224.4,533.6 1229.0,531.3 1233.6,532.6 1238.2,532.3 1242.8,533.9 1247.4,532.4 1252.0,532.0 1256.9,531.3 1261.8,532.7 1266.6,530.4 1271.5,530.0 1276.4,531.4 1281.2,529.2 1286.1,529.3 1291.0,528.8 1296.0,527.7 1301.0,528.2 1306.0,526.5 1311.0,525.9 1316.0,527.6 1321.0,525.6' fill='none' stroke='#f26a3d' stroke-width='1.2' stroke-dasharray='9.5 8.5' stroke-linejoin='round'/><polyline points='466.0,533.4 471.0,534.5 476.0,534.0 481.2,535.8 486.4,535.4 491.6,536.7 496.8,537.5 502.0,536.6 506.7,537.0 511.3,535.4 516.0,535.9 520.7,536.0 525.3,537.8 530.0,537.0 534.8,536.7 539.5,537.3 544.2,537.4 549.0,536.1 553.8,537.5 558.7,537.3 563.5,535.2 568.3,535.6 573.2,535.9 578.0,536.0 582.8,538.1 587.7,537.9 592.5,537.0 597.3,536.9 602.2,536.6 607.0,537.9 611.8,536.4 616.5,538.8 621.2,536.9 626.0,537.0 630.8,536.4 635.5,536.9 640.2,537.9 645.0,536.9 649.8,538.1 654.5,535.3 659.2,535.5 664.0,536.6 669.3,535.9 674.7,536.1 680.0,534.9 685.0,533.5 690.0,534.6 695.0,533.6 700.0,534.9 705.0,530.2 710.0,527.7 715.7,522.5 721.3,517.6 727.0,512.2 732.7,507.8 738.3,504.3 744.0,500.0 749.0,496.3 754.0,491.1 759.0,485.7 764.5,483.6 769.8,484.5 775.0,487.5 780.7,492.8 786.3,496.7 792.0,499.1 796.7,502.2 801.3,506.7 806.0,509.5 811.3,513.1 816.7,517.0 822.0,520.6 827.3,524.9 832.7,526.7 838.0,532.2 843.7,536.7 849.3,539.6 855.0,542.9 859.6,546.3 864.3,547.3 869.0,550.9 873.6,552.5 879.6,555.5 885.5,556.8 891.5,560.1 896.8,562.6 902.0,563.8 907.3,564.6 912.6,567.9 917.5,569.6 922.3,569.7 927.1,569.7 932.0,569.7 936.6,569.7 941.2,569.7 945.8,569.7 950.4,569.7 954.9,569.7 959.5,569.7 964.1,569.7 968.7,569.7 973.3,569.7 977.9,569.7 982.5,569.7 987.1,569.7 991.6,569.7 996.2,569.7 1000.8,569.7 1005.4,569.7 1010.0,569.7 1015.0,566.3 1020.0,564.7 1024.9,561.9 1029.8,560.7 1034.8,557.9 1039.7,556.0 1044.6,552.6 1049.5,550.0 1054.7,548.5 1059.9,543.5 1065.2,539.9 1070.4,536.7 1075.6,535.2 1082.2,528.8 1088.7,524.0 1093.9,518.2 1099.1,517.0 1104.4,511.9 1109.6,505.4 1114.8,502.7 1119.4,497.6 1123.9,494.5 1128.5,488.5 1133.0,485.3 1137.6,481.4 1142.4,483.7 1147.3,488.7 1152.2,492.3 1157.0,494.7 1161.9,498.6 1166.8,503.3 1171.8,506.3 1176.7,508.2 1181.6,514.0 1186.5,517.2 1191.4,521.6 1196.2,524.3 1201.1,526.8 1206.0,528.6 1210.9,531.3 1215.8,536.2 1220.7,540.0 1225.6,544.2 1230.5,544.9 1235.4,550.0 1240.0,552.6 1244.5,555.6 1249.1,558.3 1253.6,560.6 1258.2,561.5 1263.1,564.2 1268.0,564.1 1272.9,567.4 1277.8,567.9 1283.9,569.7 1290.0,569.7 1295.2,569.7 1300.3,569.7 1305.5,569.7 1310.7,569.7 1315.8,569.7 1321.0,569.7' fill='none' stroke='#3ea59b' stroke-width='1.2' stroke-dasharray='9.5 8.5' stroke-linejoin='round'/><polyline points='466.0,497.3 474.0,494.7 481.0,496.4 488.0,493.8 493.0,495.5 497.5,493.4 502.0,492.0 509.0,494.3 512.6,569.7 517.2,569.7 521.7,569.7 526.3,569.7 530.8,569.7 535.4,569.7 540.0,569.7 544.5,569.7 549.1,569.7 553.6,569.7 558.2,569.7 562.8,569.7 567.3,569.7 571.9,569.7 576.4,569.7 581.0,569.7 588.0,567.4 596.0,565.8 603.0,562.6 608.3,561.5 613.7,561.0 619.0,561.7 627.0,557.7 632.3,555.0 637.7,554.3 643.0,553.8 647.8,551.2 652.6,552.7 657.4,550.0 662.2,547.2 667.0,547.4 673.5,545.7 680.0,545.0 685.0,543.0 690.0,544.7 695.0,542.8 700.0,542.7 705.0,541.1 709.6,540.1 714.2,539.2 718.8,540.2 723.4,538.7 728.0,537.0 731.0,534.0 735.6,534.6 740.2,532.6 744.9,533.0 749.5,534.9 754.1,532.9 758.7,534.9 763.3,533.4 768.0,534.9 772.6,535.3 777.2,532.5 781.8,534.6 786.4,534.5 791.1,532.0 795.7,532.3 800.3,534.2 804.9,532.0 809.6,533.3 814.2,532.8 818.8,534.3 823.4,531.9 828.0,532.7 832.7,531.8 837.3,532.0 841.9,533.9 846.5,533.6 851.1,534.2 855.8,534.3 860.4,534.5 865.0,533.1 869.7,531.3 874.3,528.0 879.0,525.9 884.2,524.6 889.5,519.5 894.8,517.7 900.0,514.3 904.8,512.8 909.5,509.1 914.2,508.1 919.0,505.9 924.0,504.0 929.0,501.1 934.0,497.9 939.0,496.1 944.5,497.1 950.0,493.8 955.5,496.5 961.0,494.7 965.7,493.4 970.4,492.6 975.1,494.8 979.9,491.9 984.6,492.8 989.3,491.6 994.0,491.4 998.7,493.2 1003.4,493.3 1008.1,493.1 1012.9,490.8 1017.6,493.4 1022.3,491.8 1027.0,492.9 1032.2,490.8 1037.4,490.2 1042.6,491.4 1047.8,490.8 1053.0,489.6 1057.6,489.1 1062.1,487.8 1066.7,489.5 1071.3,487.0 1075.9,486.4 1080.4,485.7 1085.0,486.4 1090.0,569.7 1094.6,569.7 1099.2,569.7 1103.8,569.7 1108.4,569.7 1113.0,569.7 1117.6,569.7 1122.2,569.7 1126.8,569.7 1131.4,569.7 1136.0,569.7 1140.6,569.7 1145.2,569.7 1149.8,569.7 1154.4,569.7 1159.0,569.7 1164.2,569.7 1169.3,565.5 1174.5,566.9 1179.7,564.7 1184.8,562.5 1190.0,561.5 1194.6,559.0 1199.1,559.6 1203.7,556.6 1208.3,556.6 1212.9,556.2 1217.4,555.0 1222.0,553.3 1227.7,552.7 1233.3,551.4 1239.0,548.4 1243.6,548.4 1248.1,545.5 1252.7,543.4 1257.3,544.9 1261.9,544.1 1266.4,540.0 1271.0,540.4 1275.7,538.9 1280.4,537.9 1285.1,537.0 1289.9,534.5 1294.6,532.3 1299.3,532.1 1304.0,530.6 1309.7,530.3 1315.3,530.9 1321.0,529.0' fill='none' stroke='#f26a3d' stroke-width='1.25' stroke-linejoin='round'/><polyline points='466.0,549.7 473.0,549.0 481.0,553.6 486.0,552.0 492.0,557.0 496.8,557.6 501.5,560.1 508.6,560.9 512.6,569.7 517.2,569.7 521.7,569.7 526.3,569.7 530.8,569.7 535.4,569.7 540.0,569.7 544.5,569.7 549.1,569.7 553.6,569.7 558.2,569.7 562.8,569.7 567.3,569.7 571.9,569.7 576.4,569.7 581.0,569.7 588.0,565.8 596.0,563.3 600.7,559.8 605.3,558.6 610.0,556.1 615.3,554.0 620.7,551.9 626.0,547.4 630.5,544.4 635.0,542.5 643.0,537.9 648.0,536.0 653.0,534.0 657.7,532.3 662.3,532.7 667.0,531.5 673.5,531.8 680.0,534.0 684.5,534.7 689.0,532.9 693.5,533.2 698.0,534.1 702.5,533.7 707.0,533.2 711.5,534.8 716.0,533.6 720.5,532.8 725.0,534.5 729.5,532.7 734.0,533.1 738.5,532.5 743.0,534.2 747.5,534.9 752.0,532.6 756.5,532.6 761.0,533.7 765.5,534.8 770.0,534.5 774.5,533.0 779.0,534.1 783.5,532.0 788.0,533.1 792.5,534.3 797.0,532.9 801.5,533.8 806.0,531.9 810.5,532.0 815.0,533.2 819.5,532.8 824.0,532.6 828.5,532.2 833.0,531.6 837.5,534.7 842.0,533.6 846.5,532.8 851.0,533.1 857.0,530.1 863.0,525.9 868.3,521.2 873.7,518.3 879.0,512.5 884.2,507.9 889.5,505.7 894.8,503.7 900.0,499.1 904.8,494.8 909.5,492.1 914.2,488.7 919.0,483.9 924.2,487.4 929.4,492.0 934.6,495.2 939.8,496.5 945.0,501.1 950.0,504.0 955.0,509.7 960.0,510.7 965.0,516.7 970.0,519.2 975.0,522.2 980.0,524.6 985.0,529.2 990.0,534.0 995.0,537.5 1000.0,541.2 1005.0,545.7 1010.0,548.3 1015.2,549.3 1020.4,554.9 1025.6,556.3 1030.8,557.9 1036.0,561.3 1040.7,562.8 1045.4,562.2 1050.1,565.7 1054.9,564.6 1059.6,566.0 1064.3,568.0 1069.0,569.7 1073.5,569.7 1078.0,569.7 1082.5,569.7 1087.0,569.7 1091.5,569.7 1096.0,569.7 1100.5,569.7 1105.0,569.7 1109.5,569.7 1114.0,569.7 1118.5,569.7 1123.0,569.7 1127.5,569.7 1132.0,569.7 1136.5,569.7 1141.0,569.7 1145.5,569.7 1150.0,569.7 1154.5,569.7 1159.0,569.7 1164.2,565.5 1169.3,563.9 1174.5,559.7 1179.7,556.8 1184.8,554.8 1190.0,551.8 1194.5,549.2 1199.0,545.8 1203.5,544.1 1208.0,542.4 1212.5,537.6 1217.0,536.5 1221.5,533.1 1226.0,530.4 1231.5,528.7 1237.0,529.8 1242.5,529.5 1248.0,527.2 1252.6,528.5 1257.1,527.1 1261.7,527.9 1266.2,528.4 1270.8,527.8 1275.4,526.4 1279.9,528.7 1284.5,528.3 1289.1,526.9 1293.6,527.8 1298.2,529.0 1302.8,528.5 1307.3,528.5 1311.9,529.7 1316.4,529.1 1321.0,528.8' fill='none' stroke='#3ea59b' stroke-width='1.25' stroke-linejoin='round'/></svg>
<svg class='a' style='left:0;top:0' width='1380' height='900'><polyline points='466.0,663.1 471.2,663.1 476.4,662.7 481.6,661.4 486.8,662.8 492.0,662.5 496.5,662.1 501.0,661.4 505.5,662.2 510.0,660.7 516.0,657.8 522.0,655.0 526.5,652.5 531.0,649.8 535.5,649.9 540.0,646.5 545.3,644.3 550.7,642.2 556.0,638.1 560.5,634.9 565.0,633.1 569.5,633.0 574.0,629.3 579.3,628.0 584.7,628.3 590.0,630.0 594.5,629.1 599.0,628.7 603.5,629.8 608.0,628.2 612.5,629.3 617.0,627.2 621.5,628.3 626.0,626.4 630.8,627.8 635.5,628.0 640.2,629.0 645.0,627.9 649.8,627.3 654.5,626.6 659.2,624.6 664.0,625.0 669.3,624.8 674.7,624.3 680.0,624.7 684.8,624.4 689.5,623.6 694.2,624.0 699.0,624.4 703.8,621.8 708.5,621.5 713.2,621.8 718.0,622.0 722.8,623.0 727.5,623.0 732.2,622.5 737.0,621.6 739.0,699.7 743.6,699.7 748.2,699.7 752.8,699.7 757.4,699.7 762.0,699.7 766.6,699.7 771.2,699.7 775.8,699.7 780.4,699.7 785.0,699.7 789.6,699.7 794.2,699.7 798.8,699.7 803.4,699.7 808.0,699.7 814.0,699.1 820.0,695.8 825.0,693.5 830.0,693.3 835.0,691.7 839.8,689.8 844.5,690.5 849.2,687.9 854.0,688.6 859.7,685.1 865.3,685.5 871.0,681.5 875.8,681.3 880.7,678.0 885.5,678.4 890.3,675.6 895.2,676.4 900.0,675.0 906.5,673.1 913.0,668.4 917.7,666.9 922.3,665.4 927.0,665.9 931.7,665.4 936.3,663.5 941.0,660.4 945.7,660.0 950.3,660.9 955.0,658.6 959.7,659.1 964.3,659.2 969.0,658.9 973.7,656.2 978.3,657.9 983.0,656.3 987.7,656.3 992.3,656.7 997.0,655.4 1001.5,654.4 1006.0,656.2 1010.5,654.3 1015.0,655.8 1019.5,654.6 1024.0,655.1 1028.5,654.7 1033.0,653.8 1037.7,652.1 1042.5,652.5 1047.2,654.0 1051.9,652.0 1056.6,654.0 1061.4,653.2 1066.1,651.6 1070.8,652.2 1075.5,653.7 1080.3,650.7 1085.0,652.2 1089.8,651.9 1094.6,650.6 1099.3,647.8 1104.1,648.1 1108.9,647.1 1113.7,646.6 1118.4,645.4 1123.2,642.7 1128.0,641.8 1132.8,641.3 1137.7,638.7 1142.5,638.1 1147.3,636.5 1152.2,633.5 1157.0,633.6 1162.3,629.9 1167.7,625.8 1173.0,622.3 1177.7,620.7 1182.4,622.5 1187.1,622.1 1191.9,619.3 1196.6,619.1 1201.3,620.5 1206.0,619.3 1210.7,619.8 1215.4,617.5 1220.1,616.3 1224.9,618.2 1229.6,615.3 1234.3,615.0 1239.0,615.7 1243.9,615.3 1248.8,615.7 1253.7,616.6 1258.6,616.7 1263.5,613.6 1268.4,615.8 1273.3,614.2 1278.2,615.5 1283.1,613.6 1288.0,614.5 1293.0,614.2 1298.0,615.1 1303.0,615.5 1308.0,613.8 1313.0,614.5 1315.3,699.7 1321.0,699.7' fill='none' stroke='#3579ab' stroke-width='1.2' stroke-dasharray='9.5 8.5' stroke-linejoin='round'/><polyline points='466.0,637.2 474.0,634.3 478.7,633.6 483.3,632.2 488.0,632.0 492.5,630.7 497.0,631.7 501.5,631.4 506.0,629.1 510.7,629.5 515.4,629.8 520.1,628.1 524.8,628.5 529.5,628.8 534.2,628.9 538.8,628.6 543.5,630.3 548.2,629.3 552.9,630.2 557.6,627.8 562.3,630.5 567.0,629.1 572.7,629.6 578.3,633.5 584.0,633.6 588.8,634.2 593.5,636.6 598.2,637.6 603.0,638.6 607.8,638.7 612.5,642.6 617.2,643.6 622.0,643.4 628.5,643.9 635.0,647.0 643.0,655.0 647.8,660.4 652.5,667.1 657.2,669.5 662.0,676.5 670.0,683.6 675.0,682.6 680.0,684.5 685.5,687.3 691.0,687.9 696.5,690.4 702.0,690.8 706.8,692.9 711.5,693.5 716.2,696.5 721.0,697.0 728.0,699.7 732.7,699.7 737.4,699.7 742.1,699.7 746.8,699.7 751.5,699.7 756.2,699.7 760.9,699.7 765.6,699.7 770.4,699.7 775.1,699.7 779.8,699.7 784.5,699.7 789.2,699.7 793.9,699.7 798.6,699.7 803.3,699.7 808.0,699.7 815.0,696.5 820.2,693.7 825.5,693.5 830.8,691.0 836.0,687.7 841.7,683.6 847.3,681.7 853.0,678.3 857.5,676.5 862.0,673.9 866.5,672.3 871.0,670.2 875.8,669.3 880.5,669.1 885.2,665.6 890.0,665.0 895.7,663.5 901.3,663.5 907.0,665.0 911.8,664.5 916.5,665.4 921.2,665.3 926.0,664.9 930.8,663.4 935.5,662.5 940.2,663.4 945.0,661.3 949.8,660.8 954.5,659.0 959.2,657.1 964.0,655.7 968.8,653.8 973.5,653.8 978.2,654.3 983.0,651.8 987.8,649.6 992.5,649.6 997.2,648.1 1002.0,647.0 1006.9,646.6 1011.8,644.7 1016.6,643.6 1021.5,642.0 1026.1,639.9 1030.8,640.9 1035.4,638.2 1040.0,637.2 1045.0,637.2 1050.0,634.5 1055.0,635.6 1060.0,633.1 1064.5,632.9 1069.0,631.8 1073.5,629.9 1078.0,629.5 1082.5,630.7 1087.0,629.2 1091.5,629.7 1096.0,628.6 1100.9,629.5 1105.8,629.0 1110.6,627.6 1115.5,629.4 1120.4,628.0 1125.2,630.7 1130.1,628.5 1135.0,630.0 1139.8,631.3 1144.5,632.8 1149.2,631.9 1154.0,633.6 1158.8,633.6 1163.5,637.9 1168.2,638.5 1173.0,639.1 1177.5,639.6 1182.0,642.2 1186.5,643.8 1191.0,644.3 1196.0,646.8 1201.0,647.6 1206.0,646.6 1211.0,647.9 1215.7,649.6 1220.3,652.8 1225.0,657.7 1231.5,665.3 1238.0,672.9 1243.0,677.8 1248.0,680.3 1253.0,683.1 1257.7,684.7 1262.3,687.1 1267.0,690.8 1271.5,692.0 1276.0,695.0 1280.5,695.8 1285.0,697.6 1290.0,698.3 1295.0,698.6 1300.0,699.7 1305.2,699.7 1310.5,699.7 1315.8,699.7 1321.0,699.7' fill='none' stroke='#d93a85' stroke-width='1.2' stroke-dasharray='9.5 8.5' stroke-linejoin='round'/><polyline points='466.0,681.8 470.5,680.4 475.0,676.8 479.5,674.5 484.0,672.9 488.5,667.8 493.0,665.9 497.5,661.7 502.0,656.8 507.0,653.1 512.0,647.9 517.0,642.2 522.0,638.3 527.0,635.9 533.5,631.5 540.0,624.7 548.5,617.5 556.0,623.0 560.5,626.2 565.0,629.5 569.8,633.8 574.5,636.9 579.2,639.9 584.0,643.1 588.8,644.8 593.5,648.3 598.2,653.1 603.0,654.3 609.5,658.6 616.0,661.5 620.8,665.4 625.5,665.8 630.2,668.8 635.0,672.5 640.0,674.8 645.0,677.9 650.0,681.4 655.0,685.4 660.7,686.9 666.3,690.3 672.0,694.2 677.0,697.7 682.0,699.7 686.5,699.7 691.0,699.7 695.5,699.7 700.0,699.7 704.5,699.7 709.0,699.7 713.5,699.7 718.0,699.7 722.5,699.7 727.0,699.7 731.5,699.7 736.0,699.7 740.5,699.7 745.0,699.7 749.5,699.7 754.0,699.7 758.5,699.7 763.0,699.7 767.5,699.7 772.0,699.7 776.5,699.7 781.0,699.7 785.5,699.7 790.0,699.7 794.5,699.7 799.0,699.7 803.5,699.7 808.0,699.7 812.5,696.7 817.0,696.0 821.5,693.3 826.0,692.2 831.3,689.4 836.7,687.3 842.0,684.5 847.1,682.8 852.1,680.4 857.2,678.6 862.3,677.1 867.4,672.6 872.4,670.5 877.5,669.3 882.1,667.5 886.8,668.3 891.4,668.5 896.0,668.4 901.7,667.6 907.3,669.6 913.0,668.4 917.6,667.6 922.3,668.2 926.9,668.8 931.6,668.5 936.2,667.2 940.9,667.8 945.5,667.0 950.1,666.3 954.8,666.7 959.4,667.3 964.1,665.9 968.7,666.5 973.4,666.3 978.0,665.2 982.6,666.0 987.3,665.2 991.9,665.9 996.6,663.9 1001.2,662.7 1005.9,664.3 1010.5,663.0 1015.1,662.1 1019.8,664.7 1024.4,664.2 1029.1,661.8 1033.7,661.5 1038.4,661.9 1043.0,662.2 1047.7,662.9 1052.4,661.7 1057.1,659.8 1061.9,659.4 1066.6,659.3 1071.3,660.8 1076.0,659.5 1080.6,658.5 1085.1,660.2 1089.7,659.2 1094.3,661.2 1098.9,658.6 1103.4,659.9 1108.0,660.4 1112.6,659.6 1117.2,661.3 1121.7,659.9 1126.3,660.0 1130.9,660.0 1135.5,660.7 1140.1,659.5 1144.6,660.7 1149.2,660.8 1153.8,661.2 1158.4,659.5 1163.0,661.3 1167.5,660.9 1172.1,661.4 1176.7,659.5 1181.3,659.7 1185.9,659.8 1190.5,661.4 1195.0,660.0 1199.6,660.3 1204.2,661.1 1208.8,661.4 1213.4,658.1 1217.9,660.9 1222.5,660.3 1227.1,660.4 1231.7,659.3 1236.3,660.9 1240.8,659.7 1245.4,660.0 1250.0,659.5 1254.8,657.2 1259.6,658.7 1264.4,656.4 1269.1,654.7 1273.9,651.9 1278.7,652.2 1283.5,651.1 1288.3,649.3 1293.1,649.2 1297.9,648.9 1302.6,646.2 1307.4,643.6 1312.2,643.0 1317.0,642.5 1321.0,640.7' fill='none' stroke='#4f9c2a' stroke-width='1.2' stroke-dasharray='9.5 8.5' stroke-linejoin='round'/><polyline points='466.0,691.7 471.5,691.0 477.0,687.3 482.5,685.5 488.0,684.2 493.7,681.4 499.3,682.3 505.0,680.2 509.5,679.9 514.0,677.3 518.5,676.5 523.0,675.9 528.7,674.8 534.3,671.8 540.0,670.6 544.5,670.0 549.0,667.9 553.5,669.1 558.0,667.0 562.5,667.4 567.0,664.6 571.5,665.8 576.0,664.9 581.0,665.9 586.0,664.3 591.0,665.1 596.0,665.7 600.8,666.4 605.5,664.7 610.2,663.9 615.0,664.0 619.5,664.7 624.0,662.8 628.5,664.1 633.0,662.5 637.8,662.7 642.5,663.1 647.2,662.3 652.0,660.9 656.5,659.6 661.0,661.6 665.5,659.9 670.0,661.6 675.0,662.0 680.0,661.7 685.0,662.2 690.0,660.5 695.0,660.6 700.0,661.9 705.0,659.8 710.0,659.2 715.0,660.1 720.0,658.6 725.0,657.9 730.0,653.4 735.0,652.5 740.0,650.6 744.5,649.7 749.0,647.1 753.5,646.0 758.0,643.2 763.7,640.4 769.3,639.4 775.0,637.5 779.5,637.1 784.0,633.1 788.5,633.7 793.0,630.7 798.7,630.9 804.3,631.2 810.0,629.1 815.0,628.6 820.0,630.8 825.0,629.7 830.0,630.0 835.0,631.1 840.0,629.6 845.0,628.7 850.0,629.1 855.3,627.9 860.7,627.1 866.0,625.9 870.8,626.1 875.5,626.4 880.2,626.0 885.0,626.4 890.0,626.9 895.0,624.9 900.0,623.9 904.8,624.9 909.5,622.9 914.2,622.8 919.0,625.7 923.8,625.5 928.5,623.8 933.2,624.3 938.0,624.7 939.0,699.7 943.7,699.7 948.5,699.7 953.2,699.7 957.9,699.7 962.7,699.7 967.4,699.7 972.1,699.7 976.9,699.7 981.6,699.7 986.3,699.7 991.1,699.7 995.8,699.7 1000.5,699.7 1005.3,699.7 1010.0,699.7 1015.2,699.7 1020.4,697.0 1025.6,695.3 1030.8,695.9 1036.0,694.7 1040.5,693.8 1045.0,691.8 1049.5,689.3 1054.0,690.1 1058.5,688.6 1063.0,686.7 1068.2,686.3 1073.4,683.6 1078.6,682.8 1083.8,682.2 1089.0,680.0 1093.9,679.2 1098.8,679.1 1103.6,677.0 1108.5,673.6 1113.4,673.6 1118.2,673.4 1123.1,670.0 1128.0,670.2 1132.9,670.0 1137.8,669.8 1142.6,669.8 1147.5,668.9 1152.4,668.1 1157.2,667.3 1162.1,664.6 1167.0,665.2 1171.9,665.8 1176.8,665.6 1181.6,664.3 1186.5,663.1 1191.4,664.9 1196.2,663.2 1201.1,664.2 1206.0,663.6 1210.6,663.2 1215.2,663.0 1219.8,661.7 1224.4,662.1 1229.0,662.8 1233.6,661.5 1238.2,662.9 1242.8,662.7 1247.4,660.7 1252.0,662.0 1256.9,661.4 1261.8,660.3 1266.6,661.4 1271.5,659.1 1276.4,659.6 1281.2,660.4 1286.1,657.8 1291.0,658.8 1296.0,658.3 1301.0,658.2 1306.0,657.9 1311.0,657.9 1316.0,657.1 1321.0,655.6' fill='none' stroke='#3579ab' stroke-width='1.2' stroke-dasharray='9.5 8.5' stroke-linejoin='round'/><polyline points='466.0,681.8 470.0,679.7 474.5,676.3 479.0,677.4 483.5,673.2 488.0,672.0 492.5,671.9 497.0,667.9 501.5,669.8 506.0,667.0 510.8,665.6 515.5,666.0 520.2,665.2 525.0,666.1 530.0,664.5 535.0,666.9 540.0,666.6 545.0,666.1 549.5,664.8 554.0,665.5 558.5,664.9 563.0,663.4 567.8,663.3 572.5,660.3 577.2,659.3 582.0,659.5 586.8,657.3 591.5,657.9 596.2,654.4 601.0,654.5 605.8,653.8 610.5,654.0 615.2,652.6 620.0,651.8 624.8,650.9 629.5,650.8 634.2,648.0 639.0,647.0 643.5,646.5 648.0,644.8 652.5,642.7 657.0,643.1 661.8,641.1 666.5,640.4 671.2,637.5 676.0,637.2 680.7,634.4 685.3,634.8 690.0,633.6 694.8,632.2 699.5,635.1 704.2,634.7 709.0,633.6 713.8,634.8 718.6,632.5 723.4,633.5 728.2,633.6 733.0,634.5 738.0,634.8 743.0,633.8 748.0,632.2 753.0,633.1 757.8,635.1 762.5,635.9 767.2,636.9 772.0,636.3 776.8,637.6 781.5,637.6 786.2,639.7 791.0,641.1 795.8,642.7 800.5,643.6 805.2,645.9 810.0,646.1 814.8,645.8 819.5,648.8 824.2,650.3 829.0,650.6 833.8,653.8 838.7,654.9 843.5,658.6 849.0,663.5 854.5,666.0 860.0,671.6 864.7,676.5 869.3,680.4 874.0,684.5 879.7,687.7 885.3,686.8 891.0,689.9 896.0,690.3 901.0,692.6 906.0,695.1 911.0,695.2 915.8,696.4 920.5,697.9 925.2,697.5 930.0,699.7 934.6,699.7 939.1,699.7 943.7,699.7 948.3,699.7 952.8,699.7 957.4,699.7 962.0,699.7 966.5,699.7 971.1,699.7 975.6,699.7 980.2,699.7 984.8,699.7 989.3,699.7 993.9,699.7 998.5,699.7 1003.0,699.7 1007.6,699.7 1012.7,696.3 1017.8,694.9 1022.9,694.4 1028.0,691.7 1033.3,689.6 1038.7,683.2 1044.0,680.9 1048.8,677.1 1053.5,677.3 1058.2,673.8 1063.0,671.5 1068.7,669.1 1074.3,665.2 1080.0,664.3 1085.7,665.1 1091.3,664.3 1097.0,662.2 1102.0,661.3 1107.0,662.4 1112.0,663.0 1117.0,663.1 1121.5,662.0 1126.0,662.3 1130.5,661.8 1135.0,662.2 1140.0,662.2 1145.0,661.9 1150.0,661.3 1155.0,659.0 1159.8,658.2 1164.5,655.8 1169.2,655.3 1174.0,653.6 1178.5,652.9 1183.0,650.8 1187.5,649.3 1192.0,648.8 1196.8,648.0 1201.5,648.5 1206.2,646.4 1211.0,647.0 1215.8,644.5 1220.5,642.6 1225.2,641.0 1230.0,640.7 1235.0,641.0 1240.0,637.5 1245.0,637.2 1250.0,635.4 1254.8,634.6 1259.5,633.1 1264.2,633.2 1269.0,630.9 1273.5,631.3 1278.0,628.4 1282.5,630.1 1287.0,629.1 1292.2,627.6 1297.5,628.1 1302.8,629.0 1308.0,628.2 1314.5,628.4 1321.0,627.3' fill='none' stroke='#d93a85' stroke-width='1.2' stroke-dasharray='9.5 8.5' stroke-linejoin='round'/><polyline points='466.0,663.4 471.0,664.1 476.0,664.0 481.2,664.6 486.4,665.3 491.6,665.7 496.8,666.4 502.0,666.6 506.7,666.2 511.3,667.5 516.0,666.4 520.7,668.5 525.3,667.6 530.0,667.0 534.8,667.3 539.5,667.7 544.2,665.5 549.0,666.1 553.8,666.9 558.7,665.5 563.5,665.1 568.3,667.5 573.2,665.6 578.0,666.0 582.8,666.6 587.7,668.8 592.5,667.6 597.3,667.2 602.2,668.4 607.0,667.9 611.8,668.6 616.5,668.1 621.2,668.0 626.0,667.0 630.8,666.0 635.5,667.4 640.2,667.1 645.0,666.4 649.8,665.3 654.5,667.4 659.2,668.2 664.0,666.6 669.3,664.5 674.7,664.4 680.0,664.9 685.0,663.9 690.0,664.8 695.0,665.7 700.0,664.9 705.0,662.4 710.0,657.7 715.7,653.2 721.3,647.5 727.0,642.2 732.7,639.5 738.3,633.4 744.0,630.0 749.0,624.5 754.0,622.0 759.0,615.7 764.5,613.6 769.8,614.4 775.0,617.5 780.7,621.4 786.3,623.9 792.0,629.1 796.7,632.7 801.3,635.1 806.0,639.5 811.3,643.3 816.7,646.5 822.0,650.6 827.3,654.4 832.7,659.8 838.0,662.2 843.7,666.9 849.3,670.2 855.0,672.9 859.6,675.6 864.3,678.1 869.0,680.0 873.6,682.5 879.6,684.5 885.5,687.9 891.5,690.1 896.8,692.6 902.0,693.9 907.3,694.5 912.6,697.9 917.5,697.5 922.3,698.3 927.1,698.2 932.0,699.7 936.6,699.7 941.2,699.7 945.8,699.7 950.4,699.7 954.9,699.7 959.5,699.7 964.1,699.7 968.7,699.7 973.3,699.7 977.9,699.7 982.5,699.7 987.1,699.7 991.6,699.7 996.2,699.7 1000.8,699.7 1005.4,699.7 1010.0,699.7 1015.0,698.1 1020.0,694.7 1024.9,693.5 1029.8,691.1 1034.8,688.6 1039.7,686.5 1044.6,682.1 1049.5,680.0 1054.7,675.7 1059.9,675.4 1065.2,670.5 1070.4,666.8 1075.6,665.2 1082.2,658.7 1088.7,654.0 1093.9,650.8 1099.1,645.0 1104.4,642.0 1109.6,638.0 1114.8,632.7 1119.4,630.0 1123.9,624.1 1128.5,618.6 1133.0,617.0 1137.6,611.4 1142.4,615.9 1147.3,618.4 1152.2,622.8 1157.0,624.7 1161.9,628.5 1166.8,631.4 1171.8,636.0 1176.7,641.1 1181.6,644.9 1186.5,647.2 1191.4,651.0 1196.2,652.3 1201.1,654.4 1206.0,658.6 1210.9,662.2 1215.8,667.0 1220.7,670.2 1225.6,673.2 1230.5,677.7 1235.4,680.0 1240.0,683.6 1244.5,684.8 1249.1,685.8 1253.6,690.0 1258.2,691.5 1263.1,691.9 1268.0,693.5 1272.9,696.5 1277.8,697.9 1283.9,699.7 1290.0,699.7 1295.2,699.7 1300.3,699.7 1305.5,699.7 1310.7,699.7 1315.8,699.7 1321.0,699.7' fill='none' stroke='#4f9c2a' stroke-width='1.2' stroke-dasharray='9.5 8.5' stroke-linejoin='round'/><polyline points='466.0,627.3 474.0,624.7 481.0,626.4 488.0,623.8 493.0,625.5 497.5,623.7 502.0,622.0 509.0,624.3 512.6,699.7 517.2,699.7 521.7,699.7 526.3,699.7 530.8,699.7 535.4,699.7 540.0,699.7 544.5,699.7 549.1,699.7 553.6,699.7 558.2,699.7 562.8,699.7 567.3,699.7 571.9,699.7 576.4,699.7 581.0,699.7 588.0,697.4 596.0,695.8 603.0,692.6 608.3,691.3 613.7,690.5 619.0,691.7 627.0,687.7 632.3,687.1 637.7,684.3 643.0,683.8 647.8,681.9 652.6,680.7 657.4,681.2 662.2,680.2 667.0,677.4 673.5,676.6 680.0,675.0 685.0,673.5 690.0,674.3 695.0,672.7 700.0,672.5 705.0,671.1 709.6,669.2 714.2,668.0 718.8,669.0 723.4,666.2 728.0,667.0 731.0,664.0 735.6,665.3 740.2,662.9 744.9,662.7 749.5,665.0 754.1,663.1 758.7,663.6 763.3,662.3 768.0,664.6 772.6,663.6 777.2,662.4 781.8,663.2 786.4,664.2 791.1,664.9 795.7,662.1 800.3,663.6 804.9,661.9 809.6,664.6 814.2,662.4 818.8,662.4 823.4,662.0 828.0,664.9 832.7,663.7 837.3,664.7 841.9,662.4 846.5,663.7 851.1,661.7 855.8,663.5 860.4,662.2 865.0,663.1 869.7,659.5 874.3,659.1 879.0,655.9 884.2,652.8 889.5,648.6 894.8,647.1 900.0,644.3 904.8,642.7 909.5,640.9 914.2,637.1 919.0,635.9 924.0,634.4 929.0,630.7 934.0,628.4 939.0,626.1 944.5,625.6 950.0,626.6 955.5,624.5 961.0,624.7 965.7,622.9 970.4,624.3 975.1,623.8 979.9,621.5 984.6,622.1 989.3,622.6 994.0,621.4 998.7,623.2 1003.4,621.0 1008.1,622.5 1012.9,622.4 1017.6,623.2 1022.3,622.2 1027.0,622.9 1032.2,621.5 1037.4,622.2 1042.6,622.3 1047.8,618.7 1053.0,619.6 1057.6,617.9 1062.1,620.3 1066.7,618.1 1071.3,617.2 1075.9,617.7 1080.4,616.1 1085.0,616.4 1090.0,699.7 1094.6,699.7 1099.2,699.7 1103.8,699.7 1108.4,699.7 1113.0,699.7 1117.6,699.7 1122.2,699.7 1126.8,699.7 1131.4,699.7 1136.0,699.7 1140.6,699.7 1145.2,699.7 1149.8,699.7 1154.4,699.7 1159.0,699.7 1164.2,696.9 1169.3,696.7 1174.5,695.9 1179.7,695.2 1184.8,693.6 1190.0,691.5 1194.6,691.4 1199.1,690.4 1203.7,688.9 1208.3,685.7 1212.9,685.5 1217.4,683.5 1222.0,683.3 1227.7,680.3 1233.3,679.0 1239.0,678.4 1243.6,678.7 1248.1,674.8 1252.7,676.3 1257.3,673.0 1261.9,671.6 1266.4,671.0 1271.0,670.4 1275.7,669.3 1280.4,669.0 1285.1,667.5 1289.9,664.3 1294.6,664.2 1299.3,661.9 1304.0,660.6 1309.7,660.8 1315.3,660.6 1321.0,659.0' fill='none' stroke='#3579ab' stroke-width='1.25' stroke-linejoin='round'/><polyline points='466.0,691.7 473.0,692.6 481.0,696.5 485.7,698.6 490.3,698.1 495.0,699.7 499.5,699.7 504.1,699.7 508.6,699.7 513.1,699.7 517.6,699.7 522.2,699.7 526.7,699.7 531.2,699.7 535.7,699.7 540.3,699.7 544.8,699.7 549.3,699.7 553.8,699.7 558.4,699.7 562.9,699.7 567.4,699.7 571.9,699.7 576.5,699.7 581.0,699.7 585.5,697.8 590.0,695.9 594.5,692.6 599.0,690.1 603.5,687.7 608.8,686.2 614.2,684.6 619.5,682.9 624.8,681.0 630.1,678.5 635.4,675.0 640.7,671.0 646.1,668.7 651.4,664.7 656.7,663.6 662.0,662.7 667.3,663.1 673.6,661.4 680.0,662.2 684.6,660.6 689.1,662.8 693.7,662.7 698.3,661.0 702.9,661.4 707.4,662.5 712.0,661.5 716.8,659.6 721.6,657.7 726.4,656.5 731.2,657.2 736.0,655.0 740.8,654.7 745.6,654.7 750.4,650.6 755.2,652.1 760.0,650.2 764.8,648.0 769.6,647.2 774.4,645.6 779.2,644.4 784.0,643.1 788.8,640.7 793.6,640.2 798.4,639.8 803.2,639.1 808.0,636.6 812.7,635.6 817.4,633.0 822.1,634.4 826.8,631.6 831.5,631.1 837.3,629.4 843.2,629.6 849.0,627.2 854.5,628.1 860.0,626.6 865.5,627.4 871.0,627.2 875.8,627.6 880.7,627.5 885.5,628.8 890.3,627.0 895.2,627.5 900.0,627.9 905.0,627.6 910.0,628.0 915.0,626.3 920.0,627.2 925.3,627.4 930.7,629.6 936.0,631.1 940.8,633.9 945.6,635.1 950.4,636.6 955.2,638.3 960.0,638.4 964.5,639.0 969.0,640.3 973.5,642.4 978.1,641.2 982.6,643.1 987.1,643.6 991.6,645.6 996.9,648.5 1002.3,653.0 1007.6,657.5 1012.9,663.3 1018.2,667.6 1023.5,675.0 1028.8,681.2 1034.2,684.4 1039.5,690.1 1044.8,690.7 1050.1,693.9 1055.4,695.8 1060.6,695.7 1065.7,698.8 1070.8,699.0 1076.0,699.7 1080.6,699.7 1085.1,699.7 1089.7,699.7 1094.2,699.7 1098.8,699.7 1103.3,699.7 1107.9,699.7 1112.4,699.7 1117.0,699.7 1121.6,699.7 1126.1,699.7 1130.7,699.7 1135.2,699.7 1139.8,699.7 1144.3,699.7 1148.9,699.7 1153.4,699.7 1158.0,699.7 1163.0,697.8 1168.0,694.8 1173.0,691.2 1178.0,690.4 1183.0,686.7 1188.0,684.5 1193.0,680.3 1198.0,679.4 1203.0,677.3 1208.0,673.4 1213.5,668.7 1219.0,667.0 1224.5,665.6 1230.0,660.9 1235.0,660.5 1240.0,661.6 1245.0,661.3 1250.0,660.0 1254.7,659.3 1259.4,659.5 1264.1,660.3 1268.9,660.0 1273.6,659.8 1278.3,660.2 1283.0,660.0 1288.7,659.9 1294.3,656.4 1300.0,655.9 1305.2,653.8 1310.5,653.7 1315.8,652.5 1321.0,650.9' fill='none' stroke='#d93a85' stroke-width='1.25' stroke-linejoin='round'/><polyline points='466.0,679.7 473.0,679.0 481.0,683.6 486.0,682.0 492.0,687.0 496.8,688.0 501.5,690.1 508.6,690.9 512.6,699.7 517.2,699.7 521.7,699.7 526.3,699.7 530.8,699.7 535.4,699.7 540.0,699.7 544.5,699.7 549.1,699.7 553.6,699.7 558.2,699.7 562.8,699.7 567.3,699.7 571.9,699.7 576.4,699.7 581.0,699.7 588.0,695.8 596.0,693.3 600.7,690.0 605.3,688.4 610.0,686.1 615.3,683.2 620.7,680.6 626.0,677.4 630.5,673.4 635.0,672.5 643.0,667.9 648.0,666.6 653.0,664.0 657.7,664.3 662.3,663.1 667.0,661.5 673.5,663.5 680.0,664.0 684.5,664.5 689.0,664.7 693.5,665.2 698.0,664.4 702.5,664.5 707.0,663.6 711.5,664.8 716.0,665.2 720.5,664.7 725.0,663.6 729.5,664.1 734.0,662.9 738.5,662.7 743.0,663.9 747.5,664.9 752.0,662.9 756.5,662.7 761.0,663.9 765.5,663.0 770.0,664.1 774.5,662.1 779.0,662.4 783.5,662.5 788.0,661.9 792.5,664.2 797.0,663.2 801.5,662.6 806.0,662.3 810.5,663.6 815.0,664.4 819.5,662.8 824.0,664.5 828.5,662.5 833.0,664.7 837.5,663.3 842.0,663.2 846.5,664.3 851.0,663.1 857.0,659.6 863.0,655.9 868.3,651.5 873.7,647.4 879.0,642.5 884.2,637.9 889.5,634.6 894.8,631.2 900.0,629.1 904.8,626.1 909.5,623.1 914.2,618.1 919.0,613.9 924.2,618.6 929.4,620.1 934.6,625.0 939.8,628.8 945.0,631.1 950.0,635.3 955.0,638.4 960.0,640.9 965.0,645.3 970.0,649.3 975.0,652.2 980.0,655.3 985.0,661.1 990.0,664.3 995.0,666.5 1000.0,670.0 1005.0,675.8 1010.0,678.3 1015.2,682.3 1020.4,683.5 1025.6,685.6 1030.8,690.2 1036.0,691.3 1040.7,692.7 1045.4,694.4 1050.1,696.2 1054.9,697.2 1059.6,698.0 1064.3,698.6 1069.0,699.7 1073.5,699.7 1078.0,699.7 1082.5,699.7 1087.0,699.7 1091.5,699.7 1096.0,699.7 1100.5,699.7 1105.0,699.7 1109.5,699.7 1114.0,699.7 1118.5,699.7 1123.0,699.7 1127.5,699.7 1132.0,699.7 1136.5,699.7 1141.0,699.7 1145.5,699.7 1150.0,699.7 1154.5,699.7 1159.0,699.7 1164.2,698.0 1169.3,693.4 1174.5,689.5 1179.7,687.2 1184.8,686.2 1190.0,681.8 1194.5,678.7 1199.0,676.0 1203.5,675.4 1208.0,671.5 1212.5,667.9 1217.0,664.3 1221.5,661.7 1226.0,660.4 1231.5,659.4 1237.0,658.5 1242.5,656.5 1248.0,657.2 1252.6,658.2 1257.1,657.3 1261.7,658.9 1266.2,656.7 1270.8,657.2 1275.4,658.7 1279.9,658.9 1284.5,657.9 1289.1,657.3 1293.6,659.3 1298.2,658.8 1302.8,658.3 1307.3,659.2 1311.9,657.3 1316.4,658.0 1321.0,658.8' fill='none' stroke='#4f9c2a' stroke-width='1.25' stroke-linejoin='round'/></svg>
<svg class='a' style='left:0;top:0' width='1380' height='900'><clipPath id='ovc'><rect x='466' y='766' width='855' height='33'/></clipPath><g clip-path='url(#ovc)'><polyline points='467.5,771.3 470.7,794.2 473.8,771.5 477.1,796.4 480.2,772.0 483.8,796.7 486.7,769.9 490.2,794.9 492.8,773.4 496.5,795.0 499.8,770.1 502.4,795.4 505.0,770.3 507.8,796.9 510.9,771.3 514.5,795.4 517.8,771.5 521.1,795.6 524.0,773.5 527.8,794.5 531.2,770.8 534.0,796.1 536.6,772.6 539.7,794.5 542.7,773.3 546.2,797.0 549.0,773.1 552.2,794.1 555.2,769.8 558.5,794.7 561.4,769.8 564.3,794.1 567.8,770.0 570.6,796.7 573.2,772.7 576.0,795.3 579.1,770.3 582.5,796.6 585.8,770.0 588.9,796.4 591.8,773.4 595.3,796.1 598.9,770.3 601.9,794.4 605.2,769.9 609.0,796.4 611.8,772.6 614.8,796.1 617.4,769.9 620.7,796.3 623.9,771.0 627.0,794.1 630.2,771.8 633.8,796.5 636.5,773.1 640.0,796.3 642.8,772.5 646.5,796.4 650.2,773.0 653.4,795.7 656.1,769.7 659.8,796.3 663.2,770.5 666.8,795.2 669.7,770.2 673.1,796.8 675.9,771.7 679.5,795.2 682.4,773.2 685.2,797.0 688.0,771.3 690.6,796.5 693.6,771.8 696.3,795.9 700.0,773.4 703.3,794.9 706.6,770.1 709.1,796.9 712.8,772.3 716.5,796.9 719.8,771.4 723.2,796.0 727.0,769.8 730.2,794.8 733.8,772.4 737.2,794.6 740.9,770.9 744.2,794.3 747.8,771.2 751.3,794.4 754.6,772.0 757.6,795.3 760.9,769.8 764.2,794.0 767.8,772.4 770.8,794.8 774.0,771.3 777.6,796.7 781.0,769.6 784.3,795.6 787.1,772.3 790.3,795.2 793.9,770.5 796.5,796.1 799.9,770.3 802.6,794.3 806.0,771.3 809.6,796.0 812.9,770.3 816.0,794.6 819.7,773.0 822.7,795.3 825.6,770.0 828.7,794.5 832.3,772.3 836.0,796.2 838.8,771.3 841.6,796.4 844.7,772.0 847.8,796.1 851.4,773.4 854.5,796.8 857.1,773.0 859.7,794.9 862.9,770.7 866.4,796.9 869.1,771.3 871.7,794.5 874.5,770.1 877.1,795.1 880.2,772.0 883.5,794.6 887.2,772.2 890.0,795.6 892.8,769.5 895.9,794.9 898.7,770.6 901.6,794.9 904.8,772.0 908.3,795.8 911.8,773.1 914.4,794.2 917.9,770.0 920.9,795.1 924.6,771.0 927.8,794.4 931.3,773.3 934.4,795.0 937.2,772.4 940.8,795.1 944.2,770.4 947.8,794.1 951.5,771.6 955.0,796.0 958.7,772.9 961.6,796.8 964.7,771.7 968.2,795.5 970.8,772.7 973.4,794.6 976.2,770.8 979.6,796.6 982.4,771.6 985.8,794.5 989.2,773.3 992.3,794.2 995.0,770.4 998.1,796.1 1001.6,772.1 1004.8,794.5 1008.0,770.7 1011.0,794.5 1014.6,770.3 1018.2,794.1 1021.4,771.8 1024.2,795.4 1027.3,771.9 1029.9,794.1 1033.1,771.1 1036.6,795.3 1039.7,772.3 1042.3,795.4 1045.4,773.3 1049.0,796.2 1052.2,770.0 1055.2,794.6 1058.9,771.4 1061.8,796.4 1065.1,773.2 1067.8,794.7 1070.4,770.3 1073.2,794.9 1076.1,770.9 1079.4,796.7 1082.8,770.0 1086.0,796.2 1088.8,771.6 1091.9,795.9 1094.9,771.6 1097.7,796.4 1101.0,772.1 1104.2,794.4 1107.4,772.9 1110.3,794.8 1113.8,773.1 1116.7,796.1 1120.4,770.4 1124.1,794.3 1126.8,770.5 1130.3,796.2 1132.9,772.8 1136.0,794.6 1138.7,771.1 1142.1,796.9 1144.8,772.2 1148.5,794.1 1151.2,771.5 1154.6,795.5 1158.0,770.3 1160.6,796.7 1163.2,771.7 1166.4,795.3 1169.1,770.2 1171.9,794.5 1175.7,773.2 1178.3,796.8 1182.0,771.3 1185.5,796.0 1188.6,771.6 1191.7,795.2 1194.2,772.3 1197.8,796.5 1200.9,772.5 1203.9,796.4 1206.7,771.6 1209.2,794.3 1212.8,772.3 1216.3,795.1 1219.4,771.9 1222.5,794.1 1226.0,770.5 1229.7,794.8 1233.2,772.8 1236.2,794.3 1239.8,772.3 1243.3,794.7 1246.3,772.4 1249.0,796.0 1252.1,769.5 1255.0,795.1 1258.3,770.4 1262.0,795.0 1265.0,772.1 1268.2,795.4 1271.2,773.5 1274.6,794.9 1278.0,773.4 1280.6,795.2 1284.0,770.5 1287.1,796.8 1289.8,771.0 1292.5,796.2 1296.2,771.7 1299.3,794.1 1302.5,773.5 1305.9,794.6 1308.5,771.9 1312.0,796.9 1315.6,770.1 1318.7,796.5' fill='none' stroke='#3a86b8' stroke-width='1.05' opacity='0.55'/><polyline points='466.7,771.4 469.8,795.0 472.4,769.5 475.2,796.2 478.5,772.3 481.6,795.3 484.7,770.1 487.6,796.5 491.0,769.7 494.3,796.8 497.5,770.8 500.4,794.5 502.7,769.7 506.2,795.5 508.6,773.4 512.1,796.7 515.0,770.0 517.7,795.1 520.2,772.3 522.7,796.5 526.0,771.1 528.8,795.2 531.8,771.0 534.2,794.8 537.7,773.4 540.8,795.9 543.6,772.3 546.8,796.7 549.4,771.0 552.3,794.6 555.3,769.6 558.6,795.7 561.6,770.4 564.5,795.8 567.7,769.9 570.8,796.5 573.9,769.6 576.6,796.0 579.7,769.7 582.6,796.4 585.3,771.4 588.8,795.6 592.3,770.2 595.8,795.9 598.4,772.5 601.8,797.0 604.5,772.6 607.2,796.3 609.6,769.7 612.7,794.0 616.2,771.5 618.6,796.0 621.9,772.8 625.0,796.3 628.0,771.4 631.1,796.2 634.6,773.1 637.1,796.1 640.5,770.6 644.0,795.5 647.2,772.3 649.8,796.1 652.5,772.2 655.7,796.6 659.1,771.2 661.7,795.7 665.2,771.7 668.3,794.2 671.8,772.5 674.7,795.2 678.1,772.7 681.2,796.0 684.0,772.4 687.0,796.9 690.2,773.1 693.5,794.3 696.9,771.6 700.2,795.9 702.7,770.9 705.4,794.2 708.6,771.7 711.7,796.6 714.7,772.3 717.5,796.3 720.4,770.8 723.5,796.6 726.0,770.7 729.2,794.7 732.3,773.2 735.1,796.9 738.0,771.3 740.6,795.0 743.4,770.5 746.1,794.2 748.5,770.9 751.1,796.4 754.0,770.4 757.5,795.5 760.7,770.1 763.6,795.2 766.9,770.5 769.8,794.4 773.2,770.4 776.2,794.7 779.0,772.2 782.1,794.1 785.2,772.2 787.9,794.8 790.7,771.5 793.4,796.1 796.0,770.4 799.0,796.2 801.4,772.7 804.1,794.2 807.1,771.1 810.5,794.3 813.3,770.0 816.4,794.5 819.5,772.6 822.3,795.1 825.0,771.1 827.8,795.8 830.6,772.7 833.2,796.4 835.8,773.4 838.8,796.8 842.1,773.0 845.5,795.9 848.7,770.7 851.2,794.4 854.6,770.3 858.0,796.9 860.7,769.6 863.3,796.5 866.5,770.7 869.0,796.4 871.8,772.9 874.8,796.7 878.0,771.6 880.9,795.4 884.0,772.7 887.0,795.1 889.9,772.0 892.7,795.8 895.7,772.4 898.4,794.2 901.3,772.9 904.5,794.1 907.7,771.2 910.5,795.2 913.8,772.9 916.3,796.8 918.7,769.8 921.2,797.0 923.8,770.0 927.0,795.2 930.5,773.3 933.7,794.2 936.1,770.4 939.6,795.6 942.2,772.5 945.0,795.4 947.8,770.5 950.2,795.2 953.7,773.4 957.0,794.2 959.8,770.7 963.2,795.2 966.4,769.6 969.0,795.6 972.2,772.8 975.5,796.0 978.3,772.9 981.8,795.5 984.4,772.0 987.4,795.9 990.0,771.0 993.1,796.6 996.1,773.3 999.4,796.2 1002.2,769.9 1005.5,795.1 1008.0,771.7 1011.1,795.3 1013.9,770.7 1016.7,794.0 1019.4,771.5 1022.3,796.5 1025.1,770.3 1027.9,795.9 1030.6,773.3 1033.3,796.0 1036.5,771.1 1039.5,795.1 1041.9,772.2 1044.4,796.2 1047.7,773.5 1050.8,796.5 1053.7,770.6 1057.1,796.3 1059.7,772.1 1062.8,795.2 1065.7,773.3 1068.6,794.2 1071.4,771.4 1074.2,794.9 1077.5,770.5 1080.4,794.8 1083.4,772.1 1086.5,794.9 1089.3,770.7 1091.6,794.3 1094.9,771.1 1098.4,794.3 1101.0,772.8 1103.8,796.1 1106.5,771.2 1108.9,796.8 1111.4,770.7 1113.9,796.6 1117.3,771.0 1120.2,795.2 1123.7,770.1 1126.3,794.4 1129.8,773.2 1132.7,795.9 1135.3,773.1 1138.6,795.3 1141.9,770.5 1144.9,794.3 1147.4,772.0 1149.9,794.5 1153.3,772.1 1156.2,796.9 1159.1,770.9 1161.9,796.8 1165.4,771.6 1168.4,794.5 1171.8,771.7 1174.8,794.5 1177.6,773.1 1180.0,794.6 1183.0,772.0 1186.5,796.3 1189.4,772.7 1192.6,795.4 1195.9,772.2 1199.3,795.0 1202.1,770.6 1204.5,796.6 1206.9,773.4 1209.5,795.2 1212.0,773.4 1215.0,796.5 1218.3,772.9 1221.8,796.3 1224.6,772.1 1227.3,795.3 1230.5,772.5 1233.9,794.7 1236.6,772.5 1239.4,796.5 1241.8,772.0 1244.6,796.7 1247.5,771.2 1250.3,795.3 1253.3,771.6 1256.8,794.3 1259.5,773.0 1262.2,794.2 1264.7,770.8 1268.1,795.0 1271.3,770.3 1273.8,794.1 1276.2,770.2 1279.1,794.5 1282.3,773.5 1285.6,795.7 1289.0,770.8 1291.4,794.1 1294.8,772.1 1297.7,796.4 1300.4,769.8 1302.8,795.6 1306.2,773.2 1309.2,795.0 1312.1,772.6 1315.3,794.0 1318.7,772.2' fill='none' stroke='#dd4a93' stroke-width='1.05' opacity='0.7'/><polyline points='466.0,770.5 469.1,795.4 472.3,770.2 474.9,797.1 477.4,772.4 479.8,795.9 482.3,770.7 485.1,795.0 488.0,769.6 490.6,797.1 493.9,772.7 497.1,795.0 500.3,773.3 503.5,796.7 506.8,771.4 509.9,795.8 512.7,771.0 515.4,796.6 517.8,772.8 521.0,794.5 524.1,771.7 527.3,797.1 530.3,771.3 532.8,796.9 535.7,770.5 538.5,795.7 541.2,770.0 544.0,796.8 546.6,770.3 549.3,797.3 552.3,773.3 555.0,795.3 558.4,769.7 560.8,795.1 564.1,772.1 566.5,796.3 569.8,773.0 573.0,796.9 576.3,771.0 579.4,797.1 582.8,771.9 585.9,796.9 588.9,771.8 591.9,796.4 595.0,770.9 597.6,797.0 600.7,769.9 603.2,797.3 606.2,771.7 609.1,797.4 611.9,770.9 614.3,797.5 617.7,770.0 620.3,796.7 623.3,769.8 626.1,796.4 629.3,769.5 632.0,796.0 635.4,771.6 638.2,795.5 640.8,769.6 643.7,794.8 646.8,770.5 649.9,795.0 652.5,771.9 655.1,796.8 657.7,770.3 660.4,797.4 663.1,769.8 666.3,795.7 668.5,772.6 671.0,796.1 673.9,770.8 676.5,796.2 678.9,773.0 681.3,795.0 683.8,770.7 686.6,797.4 689.0,770.9 691.7,794.9 695.2,769.7 698.1,797.1 701.3,770.8 704.6,795.9 707.0,769.5 709.6,794.9 712.0,771.4 714.7,796.5 717.9,770.4 721.0,795.5 724.4,771.6 727.7,796.2 730.7,772.0 733.9,794.8 736.3,770.0 739.2,795.1 742.1,770.7 745.5,796.6 747.9,769.7 750.1,795.3 752.5,772.4 755.8,794.5 759.0,771.2 762.0,795.0 765.1,770.7 768.3,797.2 770.9,773.5 773.7,796.7 776.9,771.3 779.2,797.4 781.7,770.8 785.1,796.8 788.4,772.9 791.1,794.5 794.3,771.4 796.9,796.1 800.2,771.6 802.7,796.4 805.5,770.3 808.4,797.4 811.7,770.2 814.0,795.7 816.7,773.0 819.5,795.9 822.8,770.4 825.9,795.6 828.7,773.3 830.9,794.9 833.4,772.9 835.8,797.3 838.7,773.2 841.2,796.0 844.2,770.5 847.1,797.5 849.9,772.5 852.5,796.8 854.8,772.3 857.6,794.8 860.7,769.9 864.1,794.7 867.3,772.8 870.4,795.3 873.4,771.9 876.0,797.1 879.1,771.9 881.4,795.6 884.4,771.5 887.6,794.9 890.3,772.8 893.2,795.8 895.9,773.2 898.7,794.6 901.3,772.2 904.7,795.4 907.4,769.8 910.2,796.3 913.4,772.6 916.9,796.2 919.6,771.8 922.8,797.3 925.3,770.1 927.9,796.6 931.3,770.3 934.7,796.6 937.2,773.4 939.5,797.2 941.9,769.8 944.7,796.9 947.1,769.6 950.2,797.4 952.7,771.8 956.0,795.5 959.1,772.3 962.3,794.9 964.8,769.7 967.8,795.9 970.6,772.6 973.1,795.4 975.9,771.2 978.4,796.7 981.4,771.7 984.7,796.7 987.8,769.9 990.8,797.0 994.1,773.4 996.7,795.1 999.2,770.7 1001.6,796.2 1003.9,772.3 1006.9,796.2 1010.0,770.4 1012.6,796.4 1014.9,773.0 1017.2,797.2 1020.4,772.8 1023.2,796.2 1025.6,769.5 1028.5,796.8 1030.9,773.1 1033.2,796.4 1036.4,772.5 1038.7,795.3 1041.7,772.0 1045.1,795.1 1048.0,772.6 1050.9,795.8 1054.1,772.0 1056.8,797.4 1060.0,770.9 1062.8,796.6 1065.7,771.1 1068.9,795.7 1071.8,772.6 1074.6,795.9 1077.8,772.4 1080.9,794.8 1083.8,771.7 1086.3,796.8 1089.1,771.5 1092.4,797.4 1095.1,772.5 1097.9,795.0 1100.3,772.6 1103.1,795.8 1105.4,771.1 1108.6,795.3 1111.6,771.2 1113.8,795.4 1116.6,772.4 1119.6,796.3 1122.9,770.0 1126.3,797.2 1129.7,771.8 1132.5,794.7 1135.4,771.5 1137.7,795.1 1140.7,770.5 1143.1,796.2 1146.5,773.0 1149.3,797.4 1152.5,770.3 1155.7,796.0 1159.1,770.1 1162.3,795.3 1164.5,771.8 1167.1,795.4 1170.5,772.2 1173.4,795.7 1175.9,771.4 1178.3,795.3 1180.7,771.6 1183.1,795.8 1185.4,769.6 1188.4,795.3 1191.8,772.2 1195.2,797.1 1198.2,772.0 1200.7,797.1 1203.2,771.6 1206.4,795.4 1209.3,769.8 1212.5,796.0 1214.9,772.0 1217.5,796.6 1220.2,772.5 1222.6,796.2 1225.2,772.2 1228.4,796.7 1231.5,771.4 1234.0,796.7 1236.9,772.7 1239.9,797.5 1243.1,771.8 1245.8,796.8 1248.6,772.3 1251.2,797.1 1254.5,771.3 1256.8,794.8 1259.2,771.0 1262.2,795.5 1265.5,770.2 1268.4,794.9 1271.3,772.4 1274.1,795.4 1277.5,770.9 1280.6,796.5 1283.9,772.6 1287.2,794.9 1290.2,773.3 1292.6,795.8 1294.9,771.8 1298.0,796.6 1301.2,771.2 1303.7,796.9 1306.7,771.0 1309.0,796.6 1312.4,771.4 1315.5,796.2 1317.8,771.9 1320.3,797.1' fill='none' stroke='#62ad45' stroke-width='1.05' opacity='0.9'/><polyline points='468.7,773.9 471.0,795.3 473.5,773.9 475.8,794.9 478.9,773.4 482.4,796.8 485.1,772.8 487.8,796.7 490.4,773.4 493.7,795.1 496.3,773.7 499.2,796.8 502.0,771.7 504.4,795.8 507.2,772.3 510.6,795.6 513.4,773.5 516.9,796.0 520.3,770.1 522.8,797.0 526.2,772.8 529.4,796.6 532.2,773.5 534.7,797.2 537.0,771.9 540.3,795.8 543.1,772.0 545.6,794.7 548.4,770.9 551.0,795.0 553.7,773.6 556.4,796.2 558.8,773.6 562.1,796.1 564.5,772.0 567.2,795.0 570.7,773.0 573.3,797.4 576.7,773.8 579.2,796.0 582.0,773.9 584.4,797.3 587.7,772.3 590.6,795.2 593.6,772.8 596.2,797.2 598.5,771.3 601.6,796.4 604.3,772.5 607.4,795.7 610.1,773.3 613.4,794.8 616.7,770.1 619.8,796.5 622.6,772.1 625.1,796.8 628.6,771.3 632.0,795.4 634.6,771.3 637.7,795.4 640.4,770.2 642.9,794.9 646.1,770.4 649.4,795.8 652.1,773.6 654.5,797.2 657.2,773.0 660.2,796.0 663.6,771.6 666.8,797.5 670.1,770.6 673.1,795.0 676.2,772.3 679.2,795.2 681.9,770.9 684.9,795.9 687.3,772.1 690.2,797.0 693.3,773.1 696.1,794.9 699.5,772.6 702.3,796.7 704.8,771.1 708.3,797.3 711.7,772.8 714.9,797.2 718.0,770.8 721.1,795.1 724.3,772.1 727.6,796.8 730.1,773.5 732.5,796.2 735.3,773.5 738.0,795.8 740.9,771.9 743.8,796.1 746.8,771.7 749.6,794.7 753.1,771.0 756.5,797.4 759.2,773.6 761.7,795.5 765.2,772.4 768.1,797.4 770.9,771.9 774.2,796.3 777.4,771.6 780.5,795.2 783.0,773.8 785.8,796.1 789.3,772.3 792.2,796.9 794.8,773.0 797.7,795.5 800.8,772.7 803.5,794.9 806.4,770.7 809.7,794.8 812.2,773.5 815.3,796.7 818.3,773.7 820.8,795.5 823.3,770.6 826.8,794.5 829.9,773.2 832.6,796.2 835.7,773.3 838.8,796.1 841.9,771.6 845.1,794.9 848.4,771.3 851.1,794.6 853.9,772.7 856.3,797.1 858.9,772.7 861.4,795.5 863.8,772.8 867.0,796.7 869.6,771.0 872.5,796.9 875.0,773.2 878.5,797.0 881.4,772.6 884.8,795.8 887.8,773.1 891.0,795.4 894.1,773.2 896.4,795.2 899.0,771.4 901.7,795.9 904.8,772.3 907.4,796.4 910.5,773.7 913.3,797.5 916.6,773.5 919.9,795.6 922.7,770.3 926.1,796.2 928.6,772.5 930.9,796.3 933.9,773.2 936.7,796.9 939.4,773.3 941.8,797.1 944.5,773.8 947.9,794.6 950.2,772.0 952.7,795.7 956.0,771.9 959.1,795.5 962.0,771.6 964.6,795.3 968.1,773.9 971.5,795.0 974.6,772.0 977.0,795.1 979.5,773.7 982.8,796.7 986.2,773.0 989.5,797.2 992.1,770.6 995.6,796.8 998.4,773.0 1001.2,795.6 1004.2,771.5 1007.6,795.5 1010.8,772.9 1013.9,797.0 1017.3,773.8 1019.7,796.4 1022.2,770.5 1025.2,796.2 1027.7,771.9 1030.8,797.1 1033.9,772.6 1037.2,794.5 1040.5,771.5 1042.9,796.5 1045.4,773.4 1048.2,795.8 1051.3,771.8 1054.8,795.5 1057.9,770.7 1060.4,795.4 1063.3,772.3 1066.6,795.5 1069.9,771.5 1072.3,796.7 1075.7,771.0 1078.2,797.3 1081.7,770.8 1084.0,796.4 1086.4,772.9 1089.5,796.2 1092.7,770.1 1095.9,795.6 1099.1,770.6 1102.6,794.5 1105.5,771.3 1108.4,795.4 1111.2,772.2 1114.7,795.4 1117.5,773.6 1120.7,797.4 1123.6,771.2 1126.3,796.4 1129.6,772.4 1132.2,797.3 1134.6,771.5 1137.6,796.0 1140.4,772.1 1143.1,794.6 1145.6,771.5 1148.7,795.0 1151.5,772.5 1154.1,797.5 1157.6,770.3 1160.8,797.4 1163.4,772.1 1166.8,795.1 1169.5,770.0 1172.7,795.3 1176.1,770.5 1179.2,795.6 1182.6,773.4 1185.8,795.0 1188.2,773.9 1191.2,794.8 1193.7,772.1 1197.1,794.6 1200.1,773.6 1202.4,797.2 1205.0,773.5 1208.2,796.2 1211.6,772.1 1214.0,794.7 1217.2,774.0 1220.5,796.0 1223.8,770.5 1226.2,796.7 1229.6,770.4 1232.8,795.9 1235.3,770.8 1238.4,796.3 1241.8,770.2 1244.8,794.9 1247.4,771.1 1250.4,797.0 1253.4,773.7 1256.1,797.0 1259.5,770.2 1262.8,796.2 1266.1,771.5 1269.5,795.5 1272.5,770.3 1275.5,796.8 1278.7,771.3 1281.2,797.1 1283.8,770.5 1286.5,795.9 1289.8,773.1 1292.5,794.7 1295.3,771.7 1298.2,795.7 1301.1,772.7 1303.6,796.9 1306.4,771.8 1309.0,795.8 1311.3,771.7 1314.2,795.7 1316.7,772.6 1319.5,794.7' fill='none' stroke='#6db454' stroke-width='1.05' opacity='0.65'/></g></svg>
<div class='a' style="left:675px;top:768px;width:2.2px;height:30px;background:rgba(30,30,40,0.6);"></div>
<div class='a' style="left:1189.5px;top:768px;width:2.2px;height:30px;background:rgba(30,30,40,0.55);"></div>
<div class='a' style="left:1320px;top:767.5px;width:1.6px;height:43px;background:#333;"></div>
<div class='a' style="left:1317px;top:775px;width:5px;height:18px;background:#25282d;border-radius:1px;"></div>
<div class='a' style="left:1319px;top:801px;width:2.5px;height:6px;background:#999;"></div></body></html>
